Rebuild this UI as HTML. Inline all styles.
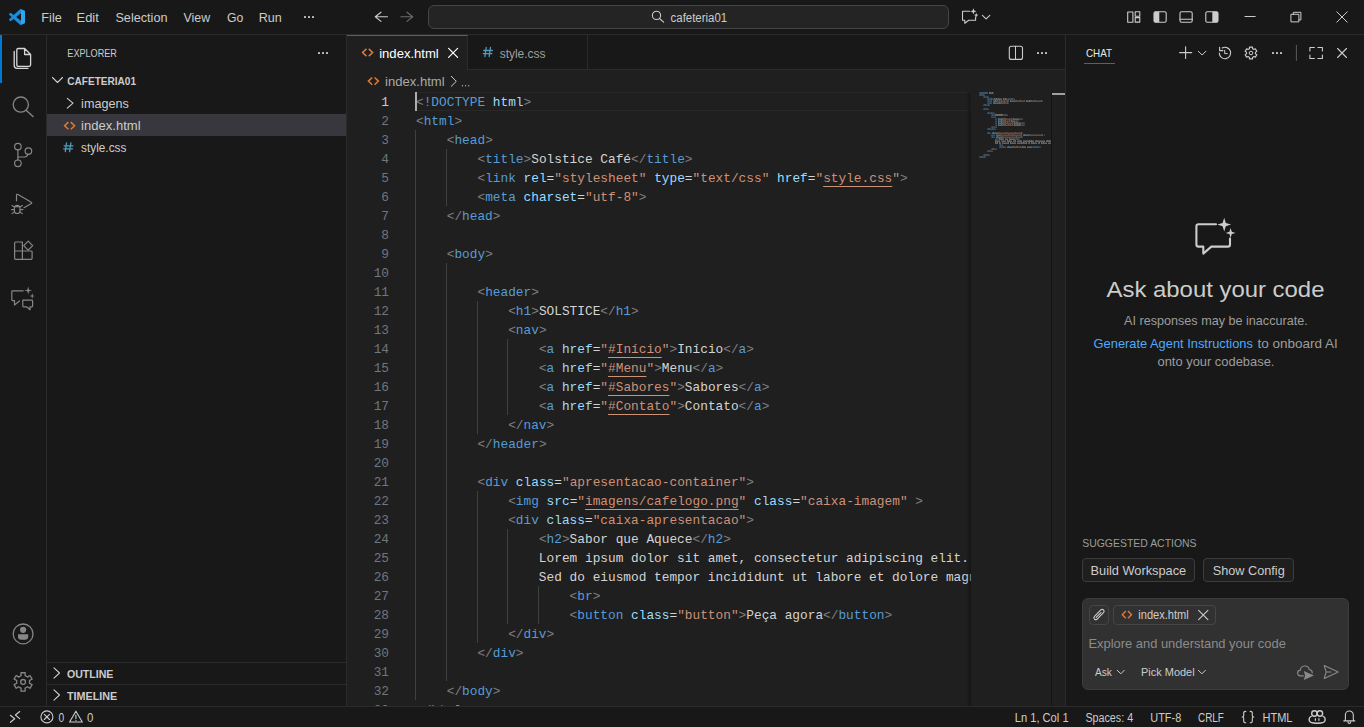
<!DOCTYPE html>
<html><head><meta charset="utf-8">
<style>
*{margin:0;padding:0;box-sizing:border-box}
html,body{width:1364px;height:727px;overflow:hidden;background:#181818;font-family:"Liberation Sans",sans-serif;color:#CCCCCC}
.a{position:absolute}
.code{font-family:"Liberation Mono",monospace;font-size:12.80px;white-space:pre;line-height:19px}
.t{color:#808080}.n{color:#569CD6}.at{color:#9CDCFE}.s{color:#CE9178}.x{color:#D4D4D4}
.u{text-decoration:underline;text-decoration-color:#CE9178;text-underline-offset:4px}
.guide{position:absolute;width:1px;background:#404040}
</style></head><body>
<div class="a" style="left:0;top:0;width:1364px;height:35px;background:#181818;border-bottom:1px solid #2B2B2B"></div>
<div class="a" style="left:0;top:35px;width:47px;height:671px;background:#181818;border-right:1px solid #2B2B2B"></div>
<div class="a" style="left:0;top:35px;width:2px;height:48px;background:#0078D4"></div>
<div class="a" style="left:47px;top:35px;width:300px;height:671px;background:#181818;border-right:1px solid #2B2B2B"></div>
<div class="a" style="left:347px;top:35px;width:719px;height:671px;background:#1F1F1F;border-right:1px solid #2B2B2B"></div>
<div class="a" style="left:1066px;top:35px;width:298px;height:671px;background:#181818"></div>
<div class="a" style="left:0;top:706px;width:1364px;height:21px;background:#181818;border-top:1px solid #2B2B2B"></div>
<!-- title search box -->
<div class="a" style="left:428px;top:5px;width:521px;height:24px;border:1px solid #454545;border-radius:6px;background:#242424"></div>
<!-- sidebar -->
<div class="a" style="left:47px;top:114px;width:299px;height:22px;background:#37373D"></div>
<div class="a" style="left:47px;top:662px;width:299px;height:1px;background:#2B2B2B"></div>
<div class="a" style="left:47px;top:684px;width:299px;height:1px;background:#2B2B2B"></div>
<!-- tabs -->
<div class="a" style="left:347px;top:35px;width:718px;height:35px;background:#181818;border-bottom:1px solid #2B2B2B"></div>
<div class="a" style="left:347px;top:35px;width:121px;height:35px;background:#1F1F1F;border-top:1px solid #0078D4;border-right:1px solid #2B2B2B"></div>
<div class="a" style="left:468px;top:35px;width:120px;height:34px;border-right:1px solid #2B2B2B"></div>
<!-- line highlight -->
<div class="a" style="left:415px;top:92px;width:556px;height:19px;border:1px solid #282828;border-left:none"></div>
<div class="a" style="left:0;top:0;width:1364px;height:706px;overflow:hidden">
<div class="a code" style="left:347px;top:93px;width:42px;text-align:right;color:#CCCCCC">1</div>
<div class="a code" style="left:347px;top:112px;width:42px;text-align:right;color:#6E7681">2</div>
<div class="a code" style="left:347px;top:131px;width:42px;text-align:right;color:#6E7681">3</div>
<div class="a code" style="left:347px;top:150px;width:42px;text-align:right;color:#6E7681">4</div>
<div class="a code" style="left:347px;top:169px;width:42px;text-align:right;color:#6E7681">5</div>
<div class="a code" style="left:347px;top:188px;width:42px;text-align:right;color:#6E7681">6</div>
<div class="a code" style="left:347px;top:207px;width:42px;text-align:right;color:#6E7681">7</div>
<div class="a code" style="left:347px;top:226px;width:42px;text-align:right;color:#6E7681">8</div>
<div class="a code" style="left:347px;top:245px;width:42px;text-align:right;color:#6E7681">9</div>
<div class="a code" style="left:347px;top:264px;width:42px;text-align:right;color:#6E7681">10</div>
<div class="a code" style="left:347px;top:283px;width:42px;text-align:right;color:#6E7681">11</div>
<div class="a code" style="left:347px;top:302px;width:42px;text-align:right;color:#6E7681">12</div>
<div class="a code" style="left:347px;top:321px;width:42px;text-align:right;color:#6E7681">13</div>
<div class="a code" style="left:347px;top:340px;width:42px;text-align:right;color:#6E7681">14</div>
<div class="a code" style="left:347px;top:359px;width:42px;text-align:right;color:#6E7681">15</div>
<div class="a code" style="left:347px;top:378px;width:42px;text-align:right;color:#6E7681">16</div>
<div class="a code" style="left:347px;top:397px;width:42px;text-align:right;color:#6E7681">17</div>
<div class="a code" style="left:347px;top:416px;width:42px;text-align:right;color:#6E7681">18</div>
<div class="a code" style="left:347px;top:435px;width:42px;text-align:right;color:#6E7681">19</div>
<div class="a code" style="left:347px;top:454px;width:42px;text-align:right;color:#6E7681">20</div>
<div class="a code" style="left:347px;top:473px;width:42px;text-align:right;color:#6E7681">21</div>
<div class="a code" style="left:347px;top:492px;width:42px;text-align:right;color:#6E7681">22</div>
<div class="a code" style="left:347px;top:511px;width:42px;text-align:right;color:#6E7681">23</div>
<div class="a code" style="left:347px;top:530px;width:42px;text-align:right;color:#6E7681">24</div>
<div class="a code" style="left:347px;top:549px;width:42px;text-align:right;color:#6E7681">25</div>
<div class="a code" style="left:347px;top:568px;width:42px;text-align:right;color:#6E7681">26</div>
<div class="a code" style="left:347px;top:587px;width:42px;text-align:right;color:#6E7681">27</div>
<div class="a code" style="left:347px;top:606px;width:42px;text-align:right;color:#6E7681">28</div>
<div class="a code" style="left:347px;top:625px;width:42px;text-align:right;color:#6E7681">29</div>
<div class="a code" style="left:347px;top:644px;width:42px;text-align:right;color:#6E7681">30</div>
<div class="a code" style="left:347px;top:663px;width:42px;text-align:right;color:#6E7681">31</div>
<div class="a code" style="left:347px;top:682px;width:42px;text-align:right;color:#6E7681">32</div>
<div class="a code" style="left:347px;top:701px;width:42px;text-align:right;color:#6E7681">33</div>
<div class="guide" style="left:415px;top:130px;height:19px"></div>
<div class="guide" style="left:415px;top:149px;height:19px"></div>
<div class="guide" style="left:446px;top:149px;height:19px"></div>
<div class="guide" style="left:415px;top:168px;height:19px"></div>
<div class="guide" style="left:446px;top:168px;height:19px"></div>
<div class="guide" style="left:415px;top:187px;height:19px"></div>
<div class="guide" style="left:446px;top:187px;height:19px"></div>
<div class="guide" style="left:415px;top:206px;height:19px"></div>
<div class="guide" style="left:415px;top:225px;height:19px"></div>
<div class="guide" style="left:415px;top:244px;height:19px"></div>
<div class="guide" style="left:415px;top:263px;height:19px"></div>
<div class="guide" style="left:446px;top:263px;height:19px"></div>
<div class="guide" style="left:415px;top:282px;height:19px"></div>
<div class="guide" style="left:446px;top:282px;height:19px"></div>
<div class="guide" style="left:415px;top:301px;height:19px"></div>
<div class="guide" style="left:446px;top:301px;height:19px"></div>
<div class="guide" style="left:477px;top:301px;height:19px"></div>
<div class="guide" style="left:415px;top:320px;height:19px"></div>
<div class="guide" style="left:446px;top:320px;height:19px"></div>
<div class="guide" style="left:477px;top:320px;height:19px"></div>
<div class="guide" style="left:415px;top:339px;height:19px"></div>
<div class="guide" style="left:446px;top:339px;height:19px"></div>
<div class="guide" style="left:477px;top:339px;height:19px"></div>
<div class="guide" style="left:507px;top:339px;height:19px"></div>
<div class="guide" style="left:415px;top:358px;height:19px"></div>
<div class="guide" style="left:446px;top:358px;height:19px"></div>
<div class="guide" style="left:477px;top:358px;height:19px"></div>
<div class="guide" style="left:507px;top:358px;height:19px"></div>
<div class="guide" style="left:415px;top:377px;height:19px"></div>
<div class="guide" style="left:446px;top:377px;height:19px"></div>
<div class="guide" style="left:477px;top:377px;height:19px"></div>
<div class="guide" style="left:507px;top:377px;height:19px"></div>
<div class="guide" style="left:415px;top:396px;height:19px"></div>
<div class="guide" style="left:446px;top:396px;height:19px"></div>
<div class="guide" style="left:477px;top:396px;height:19px"></div>
<div class="guide" style="left:507px;top:396px;height:19px"></div>
<div class="guide" style="left:415px;top:415px;height:19px"></div>
<div class="guide" style="left:446px;top:415px;height:19px"></div>
<div class="guide" style="left:477px;top:415px;height:19px"></div>
<div class="guide" style="left:415px;top:434px;height:19px"></div>
<div class="guide" style="left:446px;top:434px;height:19px"></div>
<div class="guide" style="left:415px;top:453px;height:19px"></div>
<div class="guide" style="left:446px;top:453px;height:19px"></div>
<div class="guide" style="left:415px;top:472px;height:19px"></div>
<div class="guide" style="left:446px;top:472px;height:19px"></div>
<div class="guide" style="left:415px;top:491px;height:19px"></div>
<div class="guide" style="left:446px;top:491px;height:19px"></div>
<div class="guide" style="left:477px;top:491px;height:19px"></div>
<div class="guide" style="left:415px;top:510px;height:19px"></div>
<div class="guide" style="left:446px;top:510px;height:19px"></div>
<div class="guide" style="left:477px;top:510px;height:19px"></div>
<div class="guide" style="left:415px;top:529px;height:19px"></div>
<div class="guide" style="left:446px;top:529px;height:19px"></div>
<div class="guide" style="left:477px;top:529px;height:19px"></div>
<div class="guide" style="left:507px;top:529px;height:19px"></div>
<div class="guide" style="left:415px;top:548px;height:19px"></div>
<div class="guide" style="left:446px;top:548px;height:19px"></div>
<div class="guide" style="left:477px;top:548px;height:19px"></div>
<div class="guide" style="left:507px;top:548px;height:19px"></div>
<div class="guide" style="left:415px;top:567px;height:19px"></div>
<div class="guide" style="left:446px;top:567px;height:19px"></div>
<div class="guide" style="left:477px;top:567px;height:19px"></div>
<div class="guide" style="left:507px;top:567px;height:19px"></div>
<div class="guide" style="left:415px;top:586px;height:19px"></div>
<div class="guide" style="left:446px;top:586px;height:19px"></div>
<div class="guide" style="left:477px;top:586px;height:19px"></div>
<div class="guide" style="left:507px;top:586px;height:19px"></div>
<div class="guide" style="left:538px;top:586px;height:19px"></div>
<div class="guide" style="left:415px;top:605px;height:19px"></div>
<div class="guide" style="left:446px;top:605px;height:19px"></div>
<div class="guide" style="left:477px;top:605px;height:19px"></div>
<div class="guide" style="left:507px;top:605px;height:19px"></div>
<div class="guide" style="left:538px;top:605px;height:19px"></div>
<div class="guide" style="left:415px;top:624px;height:19px"></div>
<div class="guide" style="left:446px;top:624px;height:19px"></div>
<div class="guide" style="left:477px;top:624px;height:19px"></div>
<div class="guide" style="left:415px;top:643px;height:19px"></div>
<div class="guide" style="left:446px;top:643px;height:19px"></div>
<div class="guide" style="left:415px;top:662px;height:19px"></div>
<div class="guide" style="left:446px;top:662px;height:19px"></div>
<div class="guide" style="left:415px;top:681px;height:19px"></div>
</div>
<div class="a code" style="left:416px;top:93px;width:555px;height:613px;overflow:hidden">
<div style="position:absolute;left:0;top:0px"><span class="t">&lt;</span><span class="n">!DOCTYPE</span><span class="x"> </span><span class="at">html</span><span class="t">&gt;</span></div>
<div style="position:absolute;left:0;top:19px"><span class="t">&lt;</span><span class="n">html</span><span class="t">&gt;</span></div>
<div style="position:absolute;left:0;top:38px"><span class="x">    </span><span class="t">&lt;</span><span class="n">head</span><span class="t">&gt;</span></div>
<div style="position:absolute;left:0;top:57px"><span class="x">        </span><span class="t">&lt;</span><span class="n">title</span><span class="t">&gt;</span><span class="x">Solstice Café</span><span class="t">&lt;/</span><span class="n">title</span><span class="t">&gt;</span></div>
<div style="position:absolute;left:0;top:76px"><span class="x">        </span><span class="t">&lt;</span><span class="n">link</span><span class="x"> </span><span class="at">rel</span><span class="x">=</span><span class="s">&quot;</span><span class="s">stylesheet</span><span class="s">&quot;</span><span class="x"> </span><span class="at">type</span><span class="x">=</span><span class="s">&quot;</span><span class="s">text/css</span><span class="s">&quot;</span><span class="x"> </span><span class="at">href</span><span class="x">=</span><span class="s">&quot;</span><span class="s u">style.css</span><span class="s">&quot;</span><span class="t">&gt;</span></div>
<div style="position:absolute;left:0;top:95px"><span class="x">        </span><span class="t">&lt;</span><span class="n">meta</span><span class="x"> </span><span class="at">charset</span><span class="x">=</span><span class="s">&quot;</span><span class="s">utf-8</span><span class="s">&quot;</span><span class="t">&gt;</span></div>
<div style="position:absolute;left:0;top:114px"><span class="x">    </span><span class="t">&lt;/</span><span class="n">head</span><span class="t">&gt;</span></div>
<div style="position:absolute;left:0;top:133px"></div>
<div style="position:absolute;left:0;top:152px"><span class="x">    </span><span class="t">&lt;</span><span class="n">body</span><span class="t">&gt;</span></div>
<div style="position:absolute;left:0;top:171px"></div>
<div style="position:absolute;left:0;top:190px"><span class="x">        </span><span class="t">&lt;</span><span class="n">header</span><span class="t">&gt;</span></div>
<div style="position:absolute;left:0;top:209px"><span class="x">            </span><span class="t">&lt;</span><span class="n">h1</span><span class="t">&gt;</span><span class="x">SOLSTICE</span><span class="t">&lt;/</span><span class="n">h1</span><span class="t">&gt;</span></div>
<div style="position:absolute;left:0;top:228px"><span class="x">            </span><span class="t">&lt;</span><span class="n">nav</span><span class="t">&gt;</span></div>
<div style="position:absolute;left:0;top:247px"><span class="x">                </span><span class="t">&lt;</span><span class="n">a</span><span class="x"> </span><span class="at">href</span><span class="x">=</span><span class="s">&quot;</span><span class="s u">#Início</span><span class="s">&quot;</span><span class="t">&gt;</span><span class="x">Início</span><span class="t">&lt;/</span><span class="n">a</span><span class="t">&gt;</span></div>
<div style="position:absolute;left:0;top:266px"><span class="x">                </span><span class="t">&lt;</span><span class="n">a</span><span class="x"> </span><span class="at">href</span><span class="x">=</span><span class="s">&quot;</span><span class="s u">#Menu</span><span class="s">&quot;</span><span class="t">&gt;</span><span class="x">Menu</span><span class="t">&lt;/</span><span class="n">a</span><span class="t">&gt;</span></div>
<div style="position:absolute;left:0;top:285px"><span class="x">                </span><span class="t">&lt;</span><span class="n">a</span><span class="x"> </span><span class="at">href</span><span class="x">=</span><span class="s">&quot;</span><span class="s u">#Sabores</span><span class="s">&quot;</span><span class="t">&gt;</span><span class="x">Sabores</span><span class="t">&lt;/</span><span class="n">a</span><span class="t">&gt;</span></div>
<div style="position:absolute;left:0;top:304px"><span class="x">                </span><span class="t">&lt;</span><span class="n">a</span><span class="x"> </span><span class="at">href</span><span class="x">=</span><span class="s">&quot;</span><span class="s u">#Contato</span><span class="s">&quot;</span><span class="t">&gt;</span><span class="x">Contato</span><span class="t">&lt;/</span><span class="n">a</span><span class="t">&gt;</span></div>
<div style="position:absolute;left:0;top:323px"><span class="x">            </span><span class="t">&lt;/</span><span class="n">nav</span><span class="t">&gt;</span></div>
<div style="position:absolute;left:0;top:342px"><span class="x">        </span><span class="t">&lt;/</span><span class="n">header</span><span class="t">&gt;</span></div>
<div style="position:absolute;left:0;top:361px"></div>
<div style="position:absolute;left:0;top:380px"><span class="x">        </span><span class="t">&lt;</span><span class="n">div</span><span class="x"> </span><span class="at">class</span><span class="x">=</span><span class="s">&quot;</span><span class="s">apresentacao-container</span><span class="s">&quot;</span><span class="t">&gt;</span></div>
<div style="position:absolute;left:0;top:399px"><span class="x">            </span><span class="t">&lt;</span><span class="n">img</span><span class="x"> </span><span class="at">src</span><span class="x">=</span><span class="s">&quot;</span><span class="s u">imagens/cafelogo.png</span><span class="s">&quot;</span><span class="x"> </span><span class="at">class</span><span class="x">=</span><span class="s">&quot;</span><span class="s">caixa-imagem</span><span class="s">&quot;</span><span class="x"> </span><span class="t">&gt;</span></div>
<div style="position:absolute;left:0;top:418px"><span class="x">            </span><span class="t">&lt;</span><span class="n">div</span><span class="x"> </span><span class="at">class</span><span class="x">=</span><span class="s">&quot;</span><span class="s">caixa-apresentacao</span><span class="s">&quot;</span><span class="t">&gt;</span></div>
<div style="position:absolute;left:0;top:437px"><span class="x">                </span><span class="t">&lt;</span><span class="n">h2</span><span class="t">&gt;</span><span class="x">Sabor que Aquece</span><span class="t">&lt;/</span><span class="n">h2</span><span class="t">&gt;</span></div>
<div style="position:absolute;left:0;top:456px"><span class="x">                Lorem ipsum dolor sit amet, consectetur adipiscing elit.</span></div>
<div style="position:absolute;left:0;top:475px"><span class="x">                Sed do eiusmod tempor incididunt ut labore et dolore magna aliqua.</span></div>
<div style="position:absolute;left:0;top:494px"><span class="x">                    </span><span class="t">&lt;</span><span class="n">br</span><span class="t">&gt;</span></div>
<div style="position:absolute;left:0;top:513px"><span class="x">                    </span><span class="t">&lt;</span><span class="n">button</span><span class="x"> </span><span class="at">class</span><span class="x">=</span><span class="s">&quot;</span><span class="s">button</span><span class="s">&quot;</span><span class="t">&gt;</span><span class="x">Peça agora</span><span class="t">&lt;/</span><span class="n">button</span><span class="t">&gt;</span></div>
<div style="position:absolute;left:0;top:532px"><span class="x">            </span><span class="t">&lt;/</span><span class="n">div</span><span class="t">&gt;</span></div>
<div style="position:absolute;left:0;top:551px"><span class="x">        </span><span class="t">&lt;/</span><span class="n">div</span><span class="t">&gt;</span></div>
<div style="position:absolute;left:0;top:570px"></div>
<div style="position:absolute;left:0;top:589px"><span class="x">    </span><span class="t">&lt;/</span><span class="n">body</span><span class="t">&gt;</span></div>
<div style="position:absolute;left:0;top:608px"><span class="t">&lt;/</span><span class="n">html</span><span class="t">&gt;</span></div>
</div>
<div class="a" style="left:415px;top:92px;width:2px;height:19px;background:#AEAFAD"></div>
<div class="a" style="left:966px;top:92px;width:5px;height:614px;background:linear-gradient(to right,rgba(0,0,0,0),rgba(0,0,0,0.35))"></div>
<svg class="a" style="left:979px;top:92px" width="72" height="70" opacity="0.55"><rect x="0" y="0.6" width="1" height="1.1" fill="#808080"/><rect x="1" y="0.2" width="1" height="1.5" fill="#569CD6"/><rect x="2" y="0.2" width="1" height="1.5" fill="#569CD6"/><rect x="3" y="0.2" width="1" height="1.5" fill="#569CD6"/><rect x="4" y="0.2" width="1" height="1.5" fill="#569CD6"/><rect x="5" y="0.2" width="1" height="1.5" fill="#569CD6"/><rect x="6" y="0.2" width="1" height="1.5" fill="#569CD6"/><rect x="7" y="0.2" width="1" height="1.5" fill="#569CD6"/><rect x="8" y="0.2" width="1" height="1.5" fill="#569CD6"/><rect x="10" y="0.2" width="1" height="1.5" fill="#9CDCFE"/><rect x="11" y="0.2" width="1" height="1.5" fill="#9CDCFE"/><rect x="12" y="0.6" width="1" height="1.1" fill="#9CDCFE"/><rect x="13" y="0.2" width="1" height="1.5" fill="#9CDCFE"/><rect x="14" y="0.6" width="1" height="1.1" fill="#808080"/><rect x="0" y="2.6" width="1" height="1.1" fill="#808080"/><rect x="1" y="2.2" width="1" height="1.5" fill="#569CD6"/><rect x="2" y="2.2" width="1" height="1.5" fill="#569CD6"/><rect x="3" y="2.6" width="1" height="1.1" fill="#569CD6"/><rect x="4" y="2.2" width="1" height="1.5" fill="#569CD6"/><rect x="5" y="2.6" width="1" height="1.1" fill="#808080"/><rect x="4" y="4.6" width="1" height="1.1" fill="#808080"/><rect x="5" y="4.2" width="1" height="1.5" fill="#569CD6"/><rect x="6" y="4.6" width="1" height="1.1" fill="#569CD6"/><rect x="7" y="4.6" width="1" height="1.1" fill="#569CD6"/><rect x="8" y="4.2" width="1" height="1.5" fill="#569CD6"/><rect x="9" y="4.6" width="1" height="1.1" fill="#808080"/><rect x="8" y="6.6" width="1" height="1.1" fill="#808080"/><rect x="9" y="6.2" width="1" height="1.5" fill="#569CD6"/><rect x="10" y="6.6" width="1" height="1.1" fill="#569CD6"/><rect x="11" y="6.2" width="1" height="1.5" fill="#569CD6"/><rect x="12" y="6.2" width="1" height="1.5" fill="#569CD6"/><rect x="13" y="6.6" width="1" height="1.1" fill="#569CD6"/><rect x="14" y="6.6" width="1" height="1.1" fill="#808080"/><rect x="15" y="6.2" width="1" height="1.5" fill="#CCCCCC"/><rect x="16" y="6.6" width="1" height="1.1" fill="#CCCCCC"/><rect x="17" y="6.2" width="1" height="1.5" fill="#CCCCCC"/><rect x="18" y="6.6" width="1" height="1.1" fill="#CCCCCC"/><rect x="19" y="6.2" width="1" height="1.5" fill="#CCCCCC"/><rect x="20" y="6.6" width="1" height="1.1" fill="#CCCCCC"/><rect x="21" y="6.6" width="1" height="1.1" fill="#CCCCCC"/><rect x="22" y="6.6" width="1" height="1.1" fill="#CCCCCC"/><rect x="24" y="6.2" width="1" height="1.5" fill="#CCCCCC"/><rect x="25" y="6.6" width="1" height="1.1" fill="#CCCCCC"/><rect x="26" y="6.2" width="1" height="1.5" fill="#CCCCCC"/><rect x="27" y="6.6" width="1" height="1.1" fill="#CCCCCC"/><rect x="28" y="6.6" width="1" height="1.1" fill="#808080"/><rect x="29" y="6.2" width="1" height="1.5" fill="#808080"/><rect x="30" y="6.2" width="1" height="1.5" fill="#569CD6"/><rect x="31" y="6.6" width="1" height="1.1" fill="#569CD6"/><rect x="32" y="6.2" width="1" height="1.5" fill="#569CD6"/><rect x="33" y="6.2" width="1" height="1.5" fill="#569CD6"/><rect x="34" y="6.6" width="1" height="1.1" fill="#569CD6"/><rect x="35" y="6.6" width="1" height="1.1" fill="#808080"/><rect x="8" y="8.6" width="1" height="1.1" fill="#808080"/><rect x="9" y="8.2" width="1" height="1.5" fill="#569CD6"/><rect x="10" y="8.6" width="1" height="1.1" fill="#569CD6"/><rect x="11" y="8.6" width="1" height="1.1" fill="#569CD6"/><rect x="12" y="8.2" width="1" height="1.5" fill="#569CD6"/><rect x="14" y="8.6" width="1" height="1.1" fill="#9CDCFE"/><rect x="15" y="8.6" width="1" height="1.1" fill="#9CDCFE"/><rect x="16" y="8.2" width="1" height="1.5" fill="#9CDCFE"/><rect x="17" y="8.6" width="1" height="1.1" fill="#CCCCCC"/><rect x="18" y="8.2" width="1" height="1.5" fill="#CE9178"/><rect x="19" y="8.6" width="1" height="1.1" fill="#CE9178"/><rect x="20" y="8.2" width="1" height="1.5" fill="#CE9178"/><rect x="21" y="8.6" width="1" height="1.1" fill="#CE9178"/><rect x="22" y="8.2" width="1" height="1.5" fill="#CE9178"/><rect x="23" y="8.6" width="1" height="1.1" fill="#CE9178"/><rect x="24" y="8.6" width="1" height="1.1" fill="#CE9178"/><rect x="25" y="8.2" width="1" height="1.5" fill="#CE9178"/><rect x="26" y="8.6" width="1" height="1.1" fill="#CE9178"/><rect x="27" y="8.6" width="1" height="1.1" fill="#CE9178"/><rect x="28" y="8.2" width="1" height="1.5" fill="#CE9178"/><rect x="29" y="8.2" width="1" height="1.5" fill="#CE9178"/><rect x="31" y="8.2" width="1" height="1.5" fill="#9CDCFE"/><rect x="32" y="8.6" width="1" height="1.1" fill="#9CDCFE"/><rect x="33" y="8.6" width="1" height="1.1" fill="#9CDCFE"/><rect x="34" y="8.6" width="1" height="1.1" fill="#9CDCFE"/><rect x="35" y="8.6" width="1" height="1.1" fill="#CCCCCC"/><rect x="36" y="8.2" width="1" height="1.5" fill="#CE9178"/><rect x="37" y="8.2" width="1" height="1.5" fill="#CE9178"/><rect x="38" y="8.6" width="1" height="1.1" fill="#CE9178"/><rect x="39" y="8.6" width="1" height="1.1" fill="#CE9178"/><rect x="40" y="8.2" width="1" height="1.5" fill="#CE9178"/><rect x="41" y="8.2" width="1" height="1.5" fill="#CE9178"/><rect x="42" y="8.6" width="1" height="1.1" fill="#CE9178"/><rect x="43" y="8.6" width="1" height="1.1" fill="#CE9178"/><rect x="44" y="8.6" width="1" height="1.1" fill="#CE9178"/><rect x="45" y="8.2" width="1" height="1.5" fill="#CE9178"/><rect x="47" y="8.2" width="1" height="1.5" fill="#9CDCFE"/><rect x="48" y="8.6" width="1" height="1.1" fill="#9CDCFE"/><rect x="49" y="8.6" width="1" height="1.1" fill="#9CDCFE"/><rect x="50" y="8.2" width="1" height="1.5" fill="#9CDCFE"/><rect x="51" y="8.6" width="1" height="1.1" fill="#CCCCCC"/><rect x="52" y="8.2" width="1" height="1.5" fill="#CE9178"/><rect x="53" y="8.6" width="1" height="1.1" fill="#CE9178"/><rect x="54" y="8.2" width="1" height="1.5" fill="#CE9178"/><rect x="55" y="8.6" width="1" height="1.1" fill="#CE9178"/><rect x="56" y="8.2" width="1" height="1.5" fill="#CE9178"/><rect x="57" y="8.6" width="1" height="1.1" fill="#CE9178"/><rect x="58" y="8.6" width="1" height="1.1" fill="#CE9178"/><rect x="59" y="8.6" width="1" height="1.1" fill="#CE9178"/><rect x="60" y="8.6" width="1" height="1.1" fill="#CE9178"/><rect x="61" y="8.6" width="1" height="1.1" fill="#CE9178"/><rect x="62" y="8.2" width="1" height="1.5" fill="#CE9178"/><rect x="63" y="8.6" width="1" height="1.1" fill="#808080"/><rect x="8" y="10.6" width="1" height="1.1" fill="#808080"/><rect x="9" y="10.6" width="1" height="1.1" fill="#569CD6"/><rect x="10" y="10.6" width="1" height="1.1" fill="#569CD6"/><rect x="11" y="10.2" width="1" height="1.5" fill="#569CD6"/><rect x="12" y="10.6" width="1" height="1.1" fill="#569CD6"/><rect x="14" y="10.6" width="1" height="1.1" fill="#9CDCFE"/><rect x="15" y="10.2" width="1" height="1.5" fill="#9CDCFE"/><rect x="16" y="10.6" width="1" height="1.1" fill="#9CDCFE"/><rect x="17" y="10.6" width="1" height="1.1" fill="#9CDCFE"/><rect x="18" y="10.6" width="1" height="1.1" fill="#9CDCFE"/><rect x="19" y="10.6" width="1" height="1.1" fill="#9CDCFE"/><rect x="20" y="10.2" width="1" height="1.5" fill="#9CDCFE"/><rect x="21" y="10.6" width="1" height="1.1" fill="#CCCCCC"/><rect x="22" y="10.2" width="1" height="1.5" fill="#CE9178"/><rect x="23" y="10.6" width="1" height="1.1" fill="#CE9178"/><rect x="24" y="10.2" width="1" height="1.5" fill="#CE9178"/><rect x="25" y="10.2" width="1" height="1.5" fill="#CE9178"/><rect x="26" y="10.6" width="1" height="1.1" fill="#CE9178"/><rect x="27" y="10.6" width="1" height="1.1" fill="#CE9178"/><rect x="28" y="10.2" width="1" height="1.5" fill="#CE9178"/><rect x="29" y="10.6" width="1" height="1.1" fill="#808080"/><rect x="4" y="12.6" width="1" height="1.1" fill="#808080"/><rect x="5" y="12.2" width="1" height="1.5" fill="#808080"/><rect x="6" y="12.2" width="1" height="1.5" fill="#569CD6"/><rect x="7" y="12.6" width="1" height="1.1" fill="#569CD6"/><rect x="8" y="12.6" width="1" height="1.1" fill="#569CD6"/><rect x="9" y="12.2" width="1" height="1.5" fill="#569CD6"/><rect x="10" y="12.6" width="1" height="1.1" fill="#808080"/><rect x="4" y="16.6" width="1" height="1.1" fill="#808080"/><rect x="5" y="16.2" width="1" height="1.5" fill="#569CD6"/><rect x="6" y="16.6" width="1" height="1.1" fill="#569CD6"/><rect x="7" y="16.2" width="1" height="1.5" fill="#569CD6"/><rect x="8" y="16.6" width="1" height="1.1" fill="#569CD6"/><rect x="9" y="16.6" width="1" height="1.1" fill="#808080"/><rect x="8" y="20.6" width="1" height="1.1" fill="#808080"/><rect x="9" y="20.2" width="1" height="1.5" fill="#569CD6"/><rect x="10" y="20.6" width="1" height="1.1" fill="#569CD6"/><rect x="11" y="20.6" width="1" height="1.1" fill="#569CD6"/><rect x="12" y="20.2" width="1" height="1.5" fill="#569CD6"/><rect x="13" y="20.6" width="1" height="1.1" fill="#569CD6"/><rect x="14" y="20.6" width="1" height="1.1" fill="#569CD6"/><rect x="15" y="20.6" width="1" height="1.1" fill="#808080"/><rect x="12" y="22.6" width="1" height="1.1" fill="#808080"/><rect x="13" y="22.2" width="1" height="1.5" fill="#569CD6"/><rect x="14" y="22.6" width="1" height="1.1" fill="#569CD6"/><rect x="15" y="22.6" width="1" height="1.1" fill="#808080"/><rect x="16" y="22.2" width="1" height="1.5" fill="#CCCCCC"/><rect x="17" y="22.2" width="1" height="1.5" fill="#CCCCCC"/><rect x="18" y="22.2" width="1" height="1.5" fill="#CCCCCC"/><rect x="19" y="22.2" width="1" height="1.5" fill="#CCCCCC"/><rect x="20" y="22.2" width="1" height="1.5" fill="#CCCCCC"/><rect x="21" y="22.2" width="1" height="1.5" fill="#CCCCCC"/><rect x="22" y="22.2" width="1" height="1.5" fill="#CCCCCC"/><rect x="23" y="22.2" width="1" height="1.5" fill="#CCCCCC"/><rect x="24" y="22.6" width="1" height="1.1" fill="#808080"/><rect x="25" y="22.2" width="1" height="1.5" fill="#808080"/><rect x="26" y="22.2" width="1" height="1.5" fill="#569CD6"/><rect x="27" y="22.6" width="1" height="1.1" fill="#569CD6"/><rect x="28" y="22.6" width="1" height="1.1" fill="#808080"/><rect x="12" y="24.6" width="1" height="1.1" fill="#808080"/><rect x="13" y="24.6" width="1" height="1.1" fill="#569CD6"/><rect x="14" y="24.6" width="1" height="1.1" fill="#569CD6"/><rect x="15" y="24.6" width="1" height="1.1" fill="#569CD6"/><rect x="16" y="24.6" width="1" height="1.1" fill="#808080"/><rect x="16" y="26.6" width="1" height="1.1" fill="#808080"/><rect x="17" y="26.6" width="1" height="1.1" fill="#569CD6"/><rect x="19" y="26.2" width="1" height="1.5" fill="#9CDCFE"/><rect x="20" y="26.6" width="1" height="1.1" fill="#9CDCFE"/><rect x="21" y="26.6" width="1" height="1.1" fill="#9CDCFE"/><rect x="22" y="26.2" width="1" height="1.5" fill="#9CDCFE"/><rect x="23" y="26.6" width="1" height="1.1" fill="#CCCCCC"/><rect x="24" y="26.2" width="1" height="1.5" fill="#CE9178"/><rect x="25" y="26.2" width="1" height="1.5" fill="#CE9178"/><rect x="26" y="26.2" width="1" height="1.5" fill="#CE9178"/><rect x="27" y="26.6" width="1" height="1.1" fill="#CE9178"/><rect x="28" y="26.6" width="1" height="1.1" fill="#CE9178"/><rect x="29" y="26.6" width="1" height="1.1" fill="#CE9178"/><rect x="30" y="26.6" width="1" height="1.1" fill="#CE9178"/><rect x="31" y="26.6" width="1" height="1.1" fill="#CE9178"/><rect x="32" y="26.2" width="1" height="1.5" fill="#CE9178"/><rect x="33" y="26.6" width="1" height="1.1" fill="#808080"/><rect x="34" y="26.2" width="1" height="1.5" fill="#CCCCCC"/><rect x="35" y="26.6" width="1" height="1.1" fill="#CCCCCC"/><rect x="36" y="26.6" width="1" height="1.1" fill="#CCCCCC"/><rect x="37" y="26.6" width="1" height="1.1" fill="#CCCCCC"/><rect x="38" y="26.6" width="1" height="1.1" fill="#CCCCCC"/><rect x="39" y="26.6" width="1" height="1.1" fill="#CCCCCC"/><rect x="40" y="26.6" width="1" height="1.1" fill="#808080"/><rect x="41" y="26.2" width="1" height="1.5" fill="#808080"/><rect x="42" y="26.6" width="1" height="1.1" fill="#569CD6"/><rect x="43" y="26.6" width="1" height="1.1" fill="#808080"/><rect x="16" y="28.6" width="1" height="1.1" fill="#808080"/><rect x="17" y="28.6" width="1" height="1.1" fill="#569CD6"/><rect x="19" y="28.2" width="1" height="1.5" fill="#9CDCFE"/><rect x="20" y="28.6" width="1" height="1.1" fill="#9CDCFE"/><rect x="21" y="28.6" width="1" height="1.1" fill="#9CDCFE"/><rect x="22" y="28.2" width="1" height="1.5" fill="#9CDCFE"/><rect x="23" y="28.6" width="1" height="1.1" fill="#CCCCCC"/><rect x="24" y="28.2" width="1" height="1.5" fill="#CE9178"/><rect x="25" y="28.2" width="1" height="1.5" fill="#CE9178"/><rect x="26" y="28.2" width="1" height="1.5" fill="#CE9178"/><rect x="27" y="28.6" width="1" height="1.1" fill="#CE9178"/><rect x="28" y="28.6" width="1" height="1.1" fill="#CE9178"/><rect x="29" y="28.6" width="1" height="1.1" fill="#CE9178"/><rect x="30" y="28.2" width="1" height="1.5" fill="#CE9178"/><rect x="31" y="28.6" width="1" height="1.1" fill="#808080"/><rect x="32" y="28.2" width="1" height="1.5" fill="#CCCCCC"/><rect x="33" y="28.6" width="1" height="1.1" fill="#CCCCCC"/><rect x="34" y="28.6" width="1" height="1.1" fill="#CCCCCC"/><rect x="35" y="28.6" width="1" height="1.1" fill="#CCCCCC"/><rect x="36" y="28.6" width="1" height="1.1" fill="#808080"/><rect x="37" y="28.2" width="1" height="1.5" fill="#808080"/><rect x="38" y="28.6" width="1" height="1.1" fill="#569CD6"/><rect x="39" y="28.6" width="1" height="1.1" fill="#808080"/><rect x="16" y="30.6" width="1" height="1.1" fill="#808080"/><rect x="17" y="30.6" width="1" height="1.1" fill="#569CD6"/><rect x="19" y="30.2" width="1" height="1.5" fill="#9CDCFE"/><rect x="20" y="30.6" width="1" height="1.1" fill="#9CDCFE"/><rect x="21" y="30.6" width="1" height="1.1" fill="#9CDCFE"/><rect x="22" y="30.2" width="1" height="1.5" fill="#9CDCFE"/><rect x="23" y="30.6" width="1" height="1.1" fill="#CCCCCC"/><rect x="24" y="30.2" width="1" height="1.5" fill="#CE9178"/><rect x="25" y="30.2" width="1" height="1.5" fill="#CE9178"/><rect x="26" y="30.2" width="1" height="1.5" fill="#CE9178"/><rect x="27" y="30.6" width="1" height="1.1" fill="#CE9178"/><rect x="28" y="30.2" width="1" height="1.5" fill="#CE9178"/><rect x="29" y="30.6" width="1" height="1.1" fill="#CE9178"/><rect x="30" y="30.6" width="1" height="1.1" fill="#CE9178"/><rect x="31" y="30.6" width="1" height="1.1" fill="#CE9178"/><rect x="32" y="30.6" width="1" height="1.1" fill="#CE9178"/><rect x="33" y="30.2" width="1" height="1.5" fill="#CE9178"/><rect x="34" y="30.6" width="1" height="1.1" fill="#808080"/><rect x="35" y="30.2" width="1" height="1.5" fill="#CCCCCC"/><rect x="36" y="30.6" width="1" height="1.1" fill="#CCCCCC"/><rect x="37" y="30.2" width="1" height="1.5" fill="#CCCCCC"/><rect x="38" y="30.6" width="1" height="1.1" fill="#CCCCCC"/><rect x="39" y="30.6" width="1" height="1.1" fill="#CCCCCC"/><rect x="40" y="30.6" width="1" height="1.1" fill="#CCCCCC"/><rect x="41" y="30.6" width="1" height="1.1" fill="#CCCCCC"/><rect x="42" y="30.6" width="1" height="1.1" fill="#808080"/><rect x="43" y="30.2" width="1" height="1.5" fill="#808080"/><rect x="44" y="30.6" width="1" height="1.1" fill="#569CD6"/><rect x="45" y="30.6" width="1" height="1.1" fill="#808080"/><rect x="16" y="32.6" width="1" height="1.1" fill="#808080"/><rect x="17" y="32.6" width="1" height="1.1" fill="#569CD6"/><rect x="19" y="32.2" width="1" height="1.5" fill="#9CDCFE"/><rect x="20" y="32.6" width="1" height="1.1" fill="#9CDCFE"/><rect x="21" y="32.6" width="1" height="1.1" fill="#9CDCFE"/><rect x="22" y="32.2" width="1" height="1.5" fill="#9CDCFE"/><rect x="23" y="32.6" width="1" height="1.1" fill="#CCCCCC"/><rect x="24" y="32.2" width="1" height="1.5" fill="#CE9178"/><rect x="25" y="32.2" width="1" height="1.5" fill="#CE9178"/><rect x="26" y="32.2" width="1" height="1.5" fill="#CE9178"/><rect x="27" y="32.6" width="1" height="1.1" fill="#CE9178"/><rect x="28" y="32.6" width="1" height="1.1" fill="#CE9178"/><rect x="29" y="32.2" width="1" height="1.5" fill="#CE9178"/><rect x="30" y="32.6" width="1" height="1.1" fill="#CE9178"/><rect x="31" y="32.2" width="1" height="1.5" fill="#CE9178"/><rect x="32" y="32.6" width="1" height="1.1" fill="#CE9178"/><rect x="33" y="32.2" width="1" height="1.5" fill="#CE9178"/><rect x="34" y="32.6" width="1" height="1.1" fill="#808080"/><rect x="35" y="32.2" width="1" height="1.5" fill="#CCCCCC"/><rect x="36" y="32.6" width="1" height="1.1" fill="#CCCCCC"/><rect x="37" y="32.6" width="1" height="1.1" fill="#CCCCCC"/><rect x="38" y="32.2" width="1" height="1.5" fill="#CCCCCC"/><rect x="39" y="32.6" width="1" height="1.1" fill="#CCCCCC"/><rect x="40" y="32.2" width="1" height="1.5" fill="#CCCCCC"/><rect x="41" y="32.6" width="1" height="1.1" fill="#CCCCCC"/><rect x="42" y="32.6" width="1" height="1.1" fill="#808080"/><rect x="43" y="32.2" width="1" height="1.5" fill="#808080"/><rect x="44" y="32.6" width="1" height="1.1" fill="#569CD6"/><rect x="45" y="32.6" width="1" height="1.1" fill="#808080"/><rect x="12" y="34.6" width="1" height="1.1" fill="#808080"/><rect x="13" y="34.2" width="1" height="1.5" fill="#808080"/><rect x="14" y="34.6" width="1" height="1.1" fill="#569CD6"/><rect x="15" y="34.6" width="1" height="1.1" fill="#569CD6"/><rect x="16" y="34.6" width="1" height="1.1" fill="#569CD6"/><rect x="17" y="34.6" width="1" height="1.1" fill="#808080"/><rect x="8" y="36.6" width="1" height="1.1" fill="#808080"/><rect x="9" y="36.2" width="1" height="1.5" fill="#808080"/><rect x="10" y="36.2" width="1" height="1.5" fill="#569CD6"/><rect x="11" y="36.6" width="1" height="1.1" fill="#569CD6"/><rect x="12" y="36.6" width="1" height="1.1" fill="#569CD6"/><rect x="13" y="36.2" width="1" height="1.5" fill="#569CD6"/><rect x="14" y="36.6" width="1" height="1.1" fill="#569CD6"/><rect x="15" y="36.6" width="1" height="1.1" fill="#569CD6"/><rect x="16" y="36.6" width="1" height="1.1" fill="#808080"/><rect x="8" y="40.6" width="1" height="1.1" fill="#808080"/><rect x="9" y="40.2" width="1" height="1.5" fill="#569CD6"/><rect x="10" y="40.6" width="1" height="1.1" fill="#569CD6"/><rect x="11" y="40.6" width="1" height="1.1" fill="#569CD6"/><rect x="13" y="40.6" width="1" height="1.1" fill="#9CDCFE"/><rect x="14" y="40.2" width="1" height="1.5" fill="#9CDCFE"/><rect x="15" y="40.6" width="1" height="1.1" fill="#9CDCFE"/><rect x="16" y="40.6" width="1" height="1.1" fill="#9CDCFE"/><rect x="17" y="40.6" width="1" height="1.1" fill="#9CDCFE"/><rect x="18" y="40.6" width="1" height="1.1" fill="#CCCCCC"/><rect x="19" y="40.2" width="1" height="1.5" fill="#CE9178"/><rect x="20" y="40.6" width="1" height="1.1" fill="#CE9178"/><rect x="21" y="40.6" width="1" height="1.1" fill="#CE9178"/><rect x="22" y="40.6" width="1" height="1.1" fill="#CE9178"/><rect x="23" y="40.6" width="1" height="1.1" fill="#CE9178"/><rect x="24" y="40.6" width="1" height="1.1" fill="#CE9178"/><rect x="25" y="40.6" width="1" height="1.1" fill="#CE9178"/><rect x="26" y="40.6" width="1" height="1.1" fill="#CE9178"/><rect x="27" y="40.2" width="1" height="1.5" fill="#CE9178"/><rect x="28" y="40.6" width="1" height="1.1" fill="#CE9178"/><rect x="29" y="40.6" width="1" height="1.1" fill="#CE9178"/><rect x="30" y="40.6" width="1" height="1.1" fill="#CE9178"/><rect x="31" y="40.6" width="1" height="1.1" fill="#CE9178"/><rect x="32" y="40.6" width="1" height="1.1" fill="#CE9178"/><rect x="33" y="40.6" width="1" height="1.1" fill="#CE9178"/><rect x="34" y="40.6" width="1" height="1.1" fill="#CE9178"/><rect x="35" y="40.6" width="1" height="1.1" fill="#CE9178"/><rect x="36" y="40.2" width="1" height="1.5" fill="#CE9178"/><rect x="37" y="40.6" width="1" height="1.1" fill="#CE9178"/><rect x="38" y="40.6" width="1" height="1.1" fill="#CE9178"/><rect x="39" y="40.6" width="1" height="1.1" fill="#CE9178"/><rect x="40" y="40.6" width="1" height="1.1" fill="#CE9178"/><rect x="41" y="40.6" width="1" height="1.1" fill="#CE9178"/><rect x="42" y="40.2" width="1" height="1.5" fill="#CE9178"/><rect x="43" y="40.6" width="1" height="1.1" fill="#808080"/><rect x="12" y="42.6" width="1" height="1.1" fill="#808080"/><rect x="13" y="42.6" width="1" height="1.1" fill="#569CD6"/><rect x="14" y="42.6" width="1" height="1.1" fill="#569CD6"/><rect x="15" y="42.6" width="1" height="1.1" fill="#569CD6"/><rect x="17" y="42.6" width="1" height="1.1" fill="#9CDCFE"/><rect x="18" y="42.6" width="1" height="1.1" fill="#9CDCFE"/><rect x="19" y="42.6" width="1" height="1.1" fill="#9CDCFE"/><rect x="20" y="42.6" width="1" height="1.1" fill="#CCCCCC"/><rect x="21" y="42.2" width="1" height="1.5" fill="#CE9178"/><rect x="22" y="42.6" width="1" height="1.1" fill="#CE9178"/><rect x="23" y="42.6" width="1" height="1.1" fill="#CE9178"/><rect x="24" y="42.6" width="1" height="1.1" fill="#CE9178"/><rect x="25" y="42.6" width="1" height="1.1" fill="#CE9178"/><rect x="26" y="42.6" width="1" height="1.1" fill="#CE9178"/><rect x="27" y="42.6" width="1" height="1.1" fill="#CE9178"/><rect x="28" y="42.6" width="1" height="1.1" fill="#CE9178"/><rect x="29" y="42.2" width="1" height="1.5" fill="#CE9178"/><rect x="30" y="42.6" width="1" height="1.1" fill="#CE9178"/><rect x="31" y="42.6" width="1" height="1.1" fill="#CE9178"/><rect x="32" y="42.2" width="1" height="1.5" fill="#CE9178"/><rect x="33" y="42.6" width="1" height="1.1" fill="#CE9178"/><rect x="34" y="42.2" width="1" height="1.5" fill="#CE9178"/><rect x="35" y="42.6" width="1" height="1.1" fill="#CE9178"/><rect x="36" y="42.6" width="1" height="1.1" fill="#CE9178"/><rect x="37" y="42.6" width="1" height="1.1" fill="#CE9178"/><rect x="38" y="42.6" width="1" height="1.1" fill="#CE9178"/><rect x="39" y="42.6" width="1" height="1.1" fill="#CE9178"/><rect x="40" y="42.6" width="1" height="1.1" fill="#CE9178"/><rect x="41" y="42.6" width="1" height="1.1" fill="#CE9178"/><rect x="42" y="42.2" width="1" height="1.5" fill="#CE9178"/><rect x="44" y="42.6" width="1" height="1.1" fill="#9CDCFE"/><rect x="45" y="42.2" width="1" height="1.5" fill="#9CDCFE"/><rect x="46" y="42.6" width="1" height="1.1" fill="#9CDCFE"/><rect x="47" y="42.6" width="1" height="1.1" fill="#9CDCFE"/><rect x="48" y="42.6" width="1" height="1.1" fill="#9CDCFE"/><rect x="49" y="42.6" width="1" height="1.1" fill="#CCCCCC"/><rect x="50" y="42.2" width="1" height="1.5" fill="#CE9178"/><rect x="51" y="42.6" width="1" height="1.1" fill="#CE9178"/><rect x="52" y="42.6" width="1" height="1.1" fill="#CE9178"/><rect x="53" y="42.6" width="1" height="1.1" fill="#CE9178"/><rect x="54" y="42.6" width="1" height="1.1" fill="#CE9178"/><rect x="55" y="42.6" width="1" height="1.1" fill="#CE9178"/><rect x="56" y="42.6" width="1" height="1.1" fill="#CE9178"/><rect x="57" y="42.6" width="1" height="1.1" fill="#CE9178"/><rect x="58" y="42.6" width="1" height="1.1" fill="#CE9178"/><rect x="59" y="42.6" width="1" height="1.1" fill="#CE9178"/><rect x="60" y="42.6" width="1" height="1.1" fill="#CE9178"/><rect x="61" y="42.6" width="1" height="1.1" fill="#CE9178"/><rect x="62" y="42.6" width="1" height="1.1" fill="#CE9178"/><rect x="63" y="42.2" width="1" height="1.5" fill="#CE9178"/><rect x="65" y="42.6" width="1" height="1.1" fill="#808080"/><rect x="12" y="44.6" width="1" height="1.1" fill="#808080"/><rect x="13" y="44.2" width="1" height="1.5" fill="#569CD6"/><rect x="14" y="44.6" width="1" height="1.1" fill="#569CD6"/><rect x="15" y="44.6" width="1" height="1.1" fill="#569CD6"/><rect x="17" y="44.6" width="1" height="1.1" fill="#9CDCFE"/><rect x="18" y="44.2" width="1" height="1.5" fill="#9CDCFE"/><rect x="19" y="44.6" width="1" height="1.1" fill="#9CDCFE"/><rect x="20" y="44.6" width="1" height="1.1" fill="#9CDCFE"/><rect x="21" y="44.6" width="1" height="1.1" fill="#9CDCFE"/><rect x="22" y="44.6" width="1" height="1.1" fill="#CCCCCC"/><rect x="23" y="44.2" width="1" height="1.5" fill="#CE9178"/><rect x="24" y="44.6" width="1" height="1.1" fill="#CE9178"/><rect x="25" y="44.6" width="1" height="1.1" fill="#CE9178"/><rect x="26" y="44.6" width="1" height="1.1" fill="#CE9178"/><rect x="27" y="44.6" width="1" height="1.1" fill="#CE9178"/><rect x="28" y="44.6" width="1" height="1.1" fill="#CE9178"/><rect x="29" y="44.6" width="1" height="1.1" fill="#CE9178"/><rect x="30" y="44.6" width="1" height="1.1" fill="#CE9178"/><rect x="31" y="44.6" width="1" height="1.1" fill="#CE9178"/><rect x="32" y="44.6" width="1" height="1.1" fill="#CE9178"/><rect x="33" y="44.6" width="1" height="1.1" fill="#CE9178"/><rect x="34" y="44.6" width="1" height="1.1" fill="#CE9178"/><rect x="35" y="44.6" width="1" height="1.1" fill="#CE9178"/><rect x="36" y="44.6" width="1" height="1.1" fill="#CE9178"/><rect x="37" y="44.2" width="1" height="1.5" fill="#CE9178"/><rect x="38" y="44.6" width="1" height="1.1" fill="#CE9178"/><rect x="39" y="44.6" width="1" height="1.1" fill="#CE9178"/><rect x="40" y="44.6" width="1" height="1.1" fill="#CE9178"/><rect x="41" y="44.6" width="1" height="1.1" fill="#CE9178"/><rect x="42" y="44.2" width="1" height="1.5" fill="#CE9178"/><rect x="43" y="44.6" width="1" height="1.1" fill="#808080"/><rect x="16" y="46.6" width="1" height="1.1" fill="#808080"/><rect x="17" y="46.2" width="1" height="1.5" fill="#569CD6"/><rect x="18" y="46.6" width="1" height="1.1" fill="#569CD6"/><rect x="19" y="46.6" width="1" height="1.1" fill="#808080"/><rect x="20" y="46.2" width="1" height="1.5" fill="#CCCCCC"/><rect x="21" y="46.6" width="1" height="1.1" fill="#CCCCCC"/><rect x="22" y="46.2" width="1" height="1.5" fill="#CCCCCC"/><rect x="23" y="46.6" width="1" height="1.1" fill="#CCCCCC"/><rect x="24" y="46.6" width="1" height="1.1" fill="#CCCCCC"/><rect x="26" y="46.6" width="1" height="1.1" fill="#CCCCCC"/><rect x="27" y="46.6" width="1" height="1.1" fill="#CCCCCC"/><rect x="28" y="46.6" width="1" height="1.1" fill="#CCCCCC"/><rect x="30" y="46.2" width="1" height="1.5" fill="#CCCCCC"/><rect x="31" y="46.6" width="1" height="1.1" fill="#CCCCCC"/><rect x="32" y="46.6" width="1" height="1.1" fill="#CCCCCC"/><rect x="33" y="46.6" width="1" height="1.1" fill="#CCCCCC"/><rect x="34" y="46.6" width="1" height="1.1" fill="#CCCCCC"/><rect x="35" y="46.6" width="1" height="1.1" fill="#CCCCCC"/><rect x="36" y="46.6" width="1" height="1.1" fill="#808080"/><rect x="37" y="46.2" width="1" height="1.5" fill="#808080"/><rect x="38" y="46.2" width="1" height="1.5" fill="#569CD6"/><rect x="39" y="46.6" width="1" height="1.1" fill="#569CD6"/><rect x="40" y="46.6" width="1" height="1.1" fill="#808080"/><rect x="16" y="48.2" width="1" height="1.5" fill="#CCCCCC"/><rect x="17" y="48.6" width="1" height="1.1" fill="#CCCCCC"/><rect x="18" y="48.6" width="1" height="1.1" fill="#CCCCCC"/><rect x="19" y="48.6" width="1" height="1.1" fill="#CCCCCC"/><rect x="20" y="48.6" width="1" height="1.1" fill="#CCCCCC"/><rect x="22" y="48.6" width="1" height="1.1" fill="#CCCCCC"/><rect x="23" y="48.6" width="1" height="1.1" fill="#CCCCCC"/><rect x="24" y="48.6" width="1" height="1.1" fill="#CCCCCC"/><rect x="25" y="48.6" width="1" height="1.1" fill="#CCCCCC"/><rect x="26" y="48.6" width="1" height="1.1" fill="#CCCCCC"/><rect x="28" y="48.2" width="1" height="1.5" fill="#CCCCCC"/><rect x="29" y="48.6" width="1" height="1.1" fill="#CCCCCC"/><rect x="30" y="48.2" width="1" height="1.5" fill="#CCCCCC"/><rect x="31" y="48.6" width="1" height="1.1" fill="#CCCCCC"/><rect x="32" y="48.6" width="1" height="1.1" fill="#CCCCCC"/><rect x="34" y="48.6" width="1" height="1.1" fill="#CCCCCC"/><rect x="35" y="48.6" width="1" height="1.1" fill="#CCCCCC"/><rect x="36" y="48.2" width="1" height="1.5" fill="#CCCCCC"/><rect x="38" y="48.6" width="1" height="1.1" fill="#CCCCCC"/><rect x="39" y="48.6" width="1" height="1.1" fill="#CCCCCC"/><rect x="40" y="48.6" width="1" height="1.1" fill="#CCCCCC"/><rect x="41" y="48.2" width="1" height="1.5" fill="#CCCCCC"/><rect x="42" y="48.6" width="1" height="1.1" fill="#CCCCCC"/><rect x="44" y="48.6" width="1" height="1.1" fill="#CCCCCC"/><rect x="45" y="48.6" width="1" height="1.1" fill="#CCCCCC"/><rect x="46" y="48.6" width="1" height="1.1" fill="#CCCCCC"/><rect x="47" y="48.6" width="1" height="1.1" fill="#CCCCCC"/><rect x="48" y="48.6" width="1" height="1.1" fill="#CCCCCC"/><rect x="49" y="48.6" width="1" height="1.1" fill="#CCCCCC"/><rect x="50" y="48.2" width="1" height="1.5" fill="#CCCCCC"/><rect x="51" y="48.6" width="1" height="1.1" fill="#CCCCCC"/><rect x="52" y="48.2" width="1" height="1.5" fill="#CCCCCC"/><rect x="53" y="48.6" width="1" height="1.1" fill="#CCCCCC"/><rect x="54" y="48.6" width="1" height="1.1" fill="#CCCCCC"/><rect x="56" y="48.6" width="1" height="1.1" fill="#CCCCCC"/><rect x="57" y="48.2" width="1" height="1.5" fill="#CCCCCC"/><rect x="58" y="48.6" width="1" height="1.1" fill="#CCCCCC"/><rect x="59" y="48.6" width="1" height="1.1" fill="#CCCCCC"/><rect x="60" y="48.6" width="1" height="1.1" fill="#CCCCCC"/><rect x="61" y="48.6" width="1" height="1.1" fill="#CCCCCC"/><rect x="62" y="48.6" width="1" height="1.1" fill="#CCCCCC"/><rect x="63" y="48.6" width="1" height="1.1" fill="#CCCCCC"/><rect x="64" y="48.6" width="1" height="1.1" fill="#CCCCCC"/><rect x="65" y="48.6" width="1" height="1.1" fill="#CCCCCC"/><rect x="67" y="48.6" width="1" height="1.1" fill="#CCCCCC"/><rect x="68" y="48.2" width="1" height="1.5" fill="#CCCCCC"/><rect x="69" y="48.6" width="1" height="1.1" fill="#CCCCCC"/><rect x="70" y="48.2" width="1" height="1.5" fill="#CCCCCC"/><rect x="71" y="48.6" width="1" height="1.1" fill="#CCCCCC"/><rect x="16" y="50.2" width="1" height="1.5" fill="#CCCCCC"/><rect x="17" y="50.6" width="1" height="1.1" fill="#CCCCCC"/><rect x="18" y="50.2" width="1" height="1.5" fill="#CCCCCC"/><rect x="20" y="50.2" width="1" height="1.5" fill="#CCCCCC"/><rect x="21" y="50.6" width="1" height="1.1" fill="#CCCCCC"/><rect x="23" y="50.6" width="1" height="1.1" fill="#CCCCCC"/><rect x="24" y="50.6" width="1" height="1.1" fill="#CCCCCC"/><rect x="25" y="50.6" width="1" height="1.1" fill="#CCCCCC"/><rect x="26" y="50.6" width="1" height="1.1" fill="#CCCCCC"/><rect x="27" y="50.6" width="1" height="1.1" fill="#CCCCCC"/><rect x="28" y="50.6" width="1" height="1.1" fill="#CCCCCC"/><rect x="29" y="50.2" width="1" height="1.5" fill="#CCCCCC"/><rect x="31" y="50.2" width="1" height="1.5" fill="#CCCCCC"/><rect x="32" y="50.6" width="1" height="1.1" fill="#CCCCCC"/><rect x="33" y="50.6" width="1" height="1.1" fill="#CCCCCC"/><rect x="34" y="50.6" width="1" height="1.1" fill="#CCCCCC"/><rect x="35" y="50.6" width="1" height="1.1" fill="#CCCCCC"/><rect x="36" y="50.6" width="1" height="1.1" fill="#CCCCCC"/><rect x="38" y="50.6" width="1" height="1.1" fill="#CCCCCC"/><rect x="39" y="50.6" width="1" height="1.1" fill="#CCCCCC"/><rect x="40" y="50.6" width="1" height="1.1" fill="#CCCCCC"/><rect x="41" y="50.6" width="1" height="1.1" fill="#CCCCCC"/><rect x="42" y="50.2" width="1" height="1.5" fill="#CCCCCC"/><rect x="43" y="50.6" width="1" height="1.1" fill="#CCCCCC"/><rect x="44" y="50.2" width="1" height="1.5" fill="#CCCCCC"/><rect x="45" y="50.6" width="1" height="1.1" fill="#CCCCCC"/><rect x="46" y="50.6" width="1" height="1.1" fill="#CCCCCC"/><rect x="47" y="50.2" width="1" height="1.5" fill="#CCCCCC"/><rect x="49" y="50.6" width="1" height="1.1" fill="#CCCCCC"/><rect x="50" y="50.2" width="1" height="1.5" fill="#CCCCCC"/><rect x="52" y="50.2" width="1" height="1.5" fill="#CCCCCC"/><rect x="53" y="50.6" width="1" height="1.1" fill="#CCCCCC"/><rect x="54" y="50.2" width="1" height="1.5" fill="#CCCCCC"/><rect x="55" y="50.6" width="1" height="1.1" fill="#CCCCCC"/><rect x="56" y="50.6" width="1" height="1.1" fill="#CCCCCC"/><rect x="57" y="50.6" width="1" height="1.1" fill="#CCCCCC"/><rect x="59" y="50.6" width="1" height="1.1" fill="#CCCCCC"/><rect x="60" y="50.2" width="1" height="1.5" fill="#CCCCCC"/><rect x="62" y="50.2" width="1" height="1.5" fill="#CCCCCC"/><rect x="63" y="50.6" width="1" height="1.1" fill="#CCCCCC"/><rect x="64" y="50.2" width="1" height="1.5" fill="#CCCCCC"/><rect x="65" y="50.6" width="1" height="1.1" fill="#CCCCCC"/><rect x="66" y="50.6" width="1" height="1.1" fill="#CCCCCC"/><rect x="67" y="50.6" width="1" height="1.1" fill="#CCCCCC"/><rect x="69" y="50.6" width="1" height="1.1" fill="#CCCCCC"/><rect x="70" y="50.6" width="1" height="1.1" fill="#CCCCCC"/><rect x="71" y="50.6" width="1" height="1.1" fill="#CCCCCC"/><rect x="72" y="50.6" width="1" height="1.1" fill="#CCCCCC"/><rect x="73" y="50.6" width="1" height="1.1" fill="#CCCCCC"/><rect x="75" y="50.6" width="1" height="1.1" fill="#CCCCCC"/><rect x="76" y="50.2" width="1" height="1.5" fill="#CCCCCC"/><rect x="77" y="50.6" width="1" height="1.1" fill="#CCCCCC"/><rect x="78" y="50.6" width="1" height="1.1" fill="#CCCCCC"/><rect x="79" y="50.6" width="1" height="1.1" fill="#CCCCCC"/><rect x="80" y="50.6" width="1" height="1.1" fill="#CCCCCC"/><rect x="81" y="50.6" width="1" height="1.1" fill="#CCCCCC"/><rect x="20" y="52.6" width="1" height="1.1" fill="#808080"/><rect x="21" y="52.2" width="1" height="1.5" fill="#569CD6"/><rect x="22" y="52.6" width="1" height="1.1" fill="#569CD6"/><rect x="23" y="52.6" width="1" height="1.1" fill="#808080"/><rect x="20" y="54.6" width="1" height="1.1" fill="#808080"/><rect x="21" y="54.2" width="1" height="1.5" fill="#569CD6"/><rect x="22" y="54.6" width="1" height="1.1" fill="#569CD6"/><rect x="23" y="54.2" width="1" height="1.5" fill="#569CD6"/><rect x="24" y="54.2" width="1" height="1.5" fill="#569CD6"/><rect x="25" y="54.6" width="1" height="1.1" fill="#569CD6"/><rect x="26" y="54.6" width="1" height="1.1" fill="#569CD6"/><rect x="28" y="54.6" width="1" height="1.1" fill="#9CDCFE"/><rect x="29" y="54.2" width="1" height="1.5" fill="#9CDCFE"/><rect x="30" y="54.6" width="1" height="1.1" fill="#9CDCFE"/><rect x="31" y="54.6" width="1" height="1.1" fill="#9CDCFE"/><rect x="32" y="54.6" width="1" height="1.1" fill="#9CDCFE"/><rect x="33" y="54.6" width="1" height="1.1" fill="#CCCCCC"/><rect x="34" y="54.2" width="1" height="1.5" fill="#CE9178"/><rect x="35" y="54.2" width="1" height="1.5" fill="#CE9178"/><rect x="36" y="54.6" width="1" height="1.1" fill="#CE9178"/><rect x="37" y="54.2" width="1" height="1.5" fill="#CE9178"/><rect x="38" y="54.2" width="1" height="1.5" fill="#CE9178"/><rect x="39" y="54.6" width="1" height="1.1" fill="#CE9178"/><rect x="40" y="54.6" width="1" height="1.1" fill="#CE9178"/><rect x="41" y="54.2" width="1" height="1.5" fill="#CE9178"/><rect x="42" y="54.6" width="1" height="1.1" fill="#808080"/><rect x="43" y="54.2" width="1" height="1.5" fill="#CCCCCC"/><rect x="44" y="54.6" width="1" height="1.1" fill="#CCCCCC"/><rect x="45" y="54.6" width="1" height="1.1" fill="#CCCCCC"/><rect x="46" y="54.6" width="1" height="1.1" fill="#CCCCCC"/><rect x="48" y="54.6" width="1" height="1.1" fill="#CCCCCC"/><rect x="49" y="54.6" width="1" height="1.1" fill="#CCCCCC"/><rect x="50" y="54.6" width="1" height="1.1" fill="#CCCCCC"/><rect x="51" y="54.6" width="1" height="1.1" fill="#CCCCCC"/><rect x="52" y="54.6" width="1" height="1.1" fill="#CCCCCC"/><rect x="53" y="54.6" width="1" height="1.1" fill="#808080"/><rect x="54" y="54.2" width="1" height="1.5" fill="#808080"/><rect x="55" y="54.2" width="1" height="1.5" fill="#569CD6"/><rect x="56" y="54.6" width="1" height="1.1" fill="#569CD6"/><rect x="57" y="54.2" width="1" height="1.5" fill="#569CD6"/><rect x="58" y="54.2" width="1" height="1.5" fill="#569CD6"/><rect x="59" y="54.6" width="1" height="1.1" fill="#569CD6"/><rect x="60" y="54.6" width="1" height="1.1" fill="#569CD6"/><rect x="61" y="54.6" width="1" height="1.1" fill="#808080"/><rect x="12" y="56.6" width="1" height="1.1" fill="#808080"/><rect x="13" y="56.2" width="1" height="1.5" fill="#808080"/><rect x="14" y="56.2" width="1" height="1.5" fill="#569CD6"/><rect x="15" y="56.6" width="1" height="1.1" fill="#569CD6"/><rect x="16" y="56.6" width="1" height="1.1" fill="#569CD6"/><rect x="17" y="56.6" width="1" height="1.1" fill="#808080"/><rect x="8" y="58.6" width="1" height="1.1" fill="#808080"/><rect x="9" y="58.2" width="1" height="1.5" fill="#808080"/><rect x="10" y="58.2" width="1" height="1.5" fill="#569CD6"/><rect x="11" y="58.6" width="1" height="1.1" fill="#569CD6"/><rect x="12" y="58.6" width="1" height="1.1" fill="#569CD6"/><rect x="13" y="58.6" width="1" height="1.1" fill="#808080"/><rect x="4" y="62.6" width="1" height="1.1" fill="#808080"/><rect x="5" y="62.2" width="1" height="1.5" fill="#808080"/><rect x="6" y="62.2" width="1" height="1.5" fill="#569CD6"/><rect x="7" y="62.6" width="1" height="1.1" fill="#569CD6"/><rect x="8" y="62.2" width="1" height="1.5" fill="#569CD6"/><rect x="9" y="62.6" width="1" height="1.1" fill="#569CD6"/><rect x="10" y="62.6" width="1" height="1.1" fill="#808080"/><rect x="0" y="64.6" width="1" height="1.1" fill="#808080"/><rect x="1" y="64.2" width="1" height="1.5" fill="#808080"/><rect x="2" y="64.2" width="1" height="1.5" fill="#569CD6"/><rect x="3" y="64.2" width="1" height="1.5" fill="#569CD6"/><rect x="4" y="64.6" width="1" height="1.1" fill="#569CD6"/><rect x="5" y="64.2" width="1" height="1.5" fill="#569CD6"/><rect x="6" y="64.6" width="1" height="1.1" fill="#808080"/></svg>
<div class="a" style="left:1051px;top:92px;width:1px;height:614px;background:#141414"></div>
<div class="a" style="left:1052px;top:93px;width:13px;height:2px;background:#A0A0A0"></div>
<!-- chat -->
<div class="a" style="left:1084px;top:63px;width:31px;height:1px;background:#0078D4"></div>
<div class="a" style="left:1082px;top:558px;width:113px;height:24px;border:1px solid #3C3C3C;border-radius:4px;background:#1F1F1F"></div>
<div class="a" style="left:1203px;top:558px;width:91px;height:24px;border:1px solid #3C3C3C;border-radius:4px;background:#1F1F1F"></div>
<div class="a" style="left:1082px;top:598px;width:267px;height:92px;border:1px solid #3C3C3C;border-radius:6px;background:#313131"></div>
<div class="a" style="left:1089px;top:605px;width:20px;height:20px;border:1px solid #454545;border-radius:4px"></div>
<div class="a" style="left:1113px;top:605px;width:103px;height:20px;border:1px solid #454545;border-radius:4px"></div>
<!--ICONS--><svg class="a" style="left:0;top:0;pointer-events:none" width="1364" height="727" viewBox="0 0 1364 727"><g transform="translate(9,9) scale(0.16)"><path fill="#1A8CDB" d="M96.46 10.8L75.86.87a6.23 6.23 0 0 0-7.1 1.21L29.33 38.04 12.15 25a4.16 4.16 0 0 0-5.32.24L1.33 30.250a4.16 4.16 0 0 0 0 6.16L16.23 50 1.33 63.6a4.16 4.16 0 0 0 0 6.16l5.5 5a4.16 4.16 0 0 0 5.32.24l17.18-13.04 39.43 35.96a6.23 6.23 0 0 0 7.1 1.21l20.6-9.92A6.24 6.24 0 0 0 100 83.6V16.4a6.24 6.24 0 0 0-3.54-5.6zM75 72.7L45.1 50 75 27.3z"/><path fill="#2DA6F0" d="M75 0.9 L96.46 10.8 A6.24 6.24 0 0 1 100 16.4 V83.6 A6.24 6.24 0 0 1 96.46 89.2 L75 99.1z"/></g>
<rect x="304" y="16" width="2" height="2" rx="0.4" fill="#CCCCCC"/>
<rect x="308" y="16" width="2" height="2" rx="0.4" fill="#CCCCCC"/>
<rect x="312" y="16" width="2" height="2" rx="0.4" fill="#CCCCCC"/>
<rect x="318" y="52" width="2" height="2" rx="0.4" fill="#CCCCCC"/>
<rect x="322" y="52" width="2" height="2" rx="0.4" fill="#CCCCCC"/>
<rect x="326" y="52" width="2" height="2" rx="0.4" fill="#CCCCCC"/>
<path d="M387.5,16.8 H375.5 M381,12.2 L375.3,16.8 L381,21.4" stroke="#CCCCCC" stroke-width="1.1" fill="none" stroke-linejoin="round" stroke-linecap="round" />
<path d="M400.8,16.8 H412.5 M407,12.2 L412.7,16.8 L407,21.4" stroke="#6B6B6B" stroke-width="1.1" fill="none" stroke-linejoin="round" stroke-linecap="round" />
<circle cx="656.5" cy="15.4" r="4.1" stroke="#CCCCCC" stroke-width="1.1" fill="none"/>
<path d="M659.5,18.5 L663.6,22.2" stroke="#CCCCCC" stroke-width="1.1" fill="none" stroke-linejoin="round" stroke-linecap="round" />
<path d="M969.8,11.3 H962.5 V20.3 H964.8 V23.2 L968.8,20.3 H975.6 V16.8" stroke="#CCCCCC" stroke-width="1.1" fill="none" stroke-linejoin="round" stroke-linecap="round" />
<path d="M973.40,8.30 L974.25,10.45 L976.40,11.30 L974.25,12.15 L973.40,14.30 L972.55,12.15 L970.40,11.30 L972.55,10.45Z" fill="#CCCCCC" />
<path d="M976.20,12.80 L976.85,14.45 L978.50,15.10 L976.85,15.75 L976.20,17.40 L975.55,15.75 L973.90,15.10 L975.55,14.45Z" fill="#CCCCCC" />
<path d="M982.4,15.4 L986.1,18.8 L989.8,15.4" stroke="#CCCCCC" stroke-width="1.1" fill="none" stroke-linejoin="round" stroke-linecap="round" />
<path d="M1127.7,12 h5.2 v10.2 h-5.2z" stroke="#CCCCCC" stroke-width="1.1" fill="none" stroke-linejoin="round" stroke-linecap="round" />
<path d="M1135.2,11.8 h4.6 v4.5 h-4.6z M1135.2,17.6 h4.6 v4.5 h-4.6z" stroke="#CCCCCC" stroke-width="1.1" fill="none" stroke-linejoin="round" stroke-linecap="round" />
<rect x="1154" y="11.7" width="12.2" height="10.6" rx="1.5" stroke="#CCCCCC" stroke-width="1.1" fill="none"/>
<path d="M1154,13.2 a1.5,1.5 0 0 1 1.5,-1.5 H1159.3 V22.3 H1155.5 a1.5,1.5 0 0 1 -1.5,-1.5z" fill="#CCCCCC" />
<rect x="1180" y="11.7" width="12.2" height="10.6" rx="1.5" stroke="#CCCCCC" stroke-width="1.1" fill="none"/>
<path d="M1180,19.2 H1192.2" stroke="#CCCCCC" stroke-width="1.1" fill="none" stroke-linejoin="round" stroke-linecap="round" />
<rect x="1205.8" y="11.7" width="12.2" height="10.6" rx="1.5" stroke="#CCCCCC" stroke-width="1.1" fill="none"/>
<path d="M1212.3,11.7 H1216.5 a1.5,1.5 0 0 1 1.5,1.5 V20.8 a1.5,1.5 0 0 1 -1.5,1.5 H1212.3z" fill="#CCCCCC" />
<path d="M1245,16.5 H1255.2" stroke="#CCCCCC" stroke-width="1.0" fill="none" stroke-linejoin="round" stroke-linecap="round" stroke-linecap="butt"/>
<path d="M1291.3,14.3 h7.6 v7.6 h-7.6z M1293.3,14.3 v-2 h7.6 v7.6 h-2" stroke="#CCCCCC" stroke-width="1.0" fill="none" stroke-linejoin="round" stroke-linecap="round" />
<path d="M1336.8,11.8 L1347.2,22.2 M1347.2,11.8 L1336.8,22.2" stroke="#CCCCCC" stroke-width="1.0" fill="none" stroke-linejoin="round" stroke-linecap="round" />
<path d="M16.8,50 a1.5,1.5 0 0 1 1.5,-1.5 H24.6 L30.6,54.5 V64.8 a1.6,1.6 0 0 1 -1.6,1.6 H18.3 a1.5,1.5 0 0 1 -1.5,-1.5z M24.6,48.5 V54.5 H30.6" stroke="#D7D7D7" stroke-width="1.3" fill="none" stroke-linejoin="round" stroke-linecap="round" />
<path d="M14.2,51.5 V65.5 a2.8,2.8 0 0 0 2.8,2.8 H28" stroke="#D7D7D7" stroke-width="1.3" fill="none" stroke-linejoin="round" stroke-linecap="round" />
<circle cx="20.8" cy="104.6" r="7.6" stroke="#868686" stroke-width="1.3" fill="none"/>
<path d="M26.4,110.4 L33,116.6" stroke="#868686" stroke-width="1.4" fill="none" stroke-linejoin="round" stroke-linecap="round" />
<circle cx="17.9" cy="146.6" r="3.3" stroke="#868686" stroke-width="1.2" fill="none"/>
<circle cx="17.9" cy="163.3" r="3.3" stroke="#868686" stroke-width="1.2" fill="none"/>
<circle cx="28.4" cy="151.1" r="3.3" stroke="#868686" stroke-width="1.2" fill="none"/>
<path d="M17.9,149.9 V160" stroke="#868686" stroke-width="1.2" fill="none" stroke-linejoin="round" stroke-linecap="round" />
<path d="M17.9,157 H24.5 a3.5,3.5 0 0 0 3.4,-3" stroke="#868686" stroke-width="1.2" fill="none" stroke-linejoin="round" stroke-linecap="round" />
<path d="M16.5,200.8 V195.2 a1,1 0 0 1 1.5,-0.8 L31.3,202.2 a0.8,0.8 0 0 1 0,1.4 L24,207.8" stroke="#868686" stroke-width="1.2" fill="none" stroke-linejoin="round" stroke-linecap="round" />
<ellipse cx="17.2" cy="209.4" rx="2.9" ry="4.1" stroke="#868686" stroke-width="1.2" fill="none"/>
<path d="M14.4,206.6 H20 M12,205.5 L14.4,207 M22.4,205.5 L20,207 M11.5,209.6 H14.3 M22.9,209.6 H20.1 M12,213.6 L14.4,212 M22.4,213.6 L20,212" stroke="#868686" stroke-width="1.1" fill="none" stroke-linejoin="round" stroke-linecap="round" />
<path d="M14.6,243 a1,1 0 0 1 1,-1 H22.4 V259.3 H15.6 a1,1 0 0 1 -1,-1z M14.6,251 H31.2 a0.9,0.9 0 0 1 0.9,0.9 V258.3 a1,1 0 0 1 -1,1 H22.4" stroke="#868686" stroke-width="1.2" fill="none" stroke-linejoin="round" stroke-linecap="round" />
<path d="M28.2,241.2 L32.7,245.7 L28.2,250.2 L23.7,245.7z" stroke="#868686" stroke-width="1.2" fill="none" stroke-linejoin="round" stroke-linecap="round" />
<path d="M23.2,290.8 H12.6 a0.8,0.8 0 0 0 -0.8,0.8 V299.8 a0.8,0.8 0 0 0 0.8,0.8 H14.5 V305 L19.5,301" stroke="#868686" stroke-width="1.2" fill="none" stroke-linejoin="round" stroke-linecap="round" />
<path d="M22.8,300.2 H31.8 a0.8,0.8 0 0 1 0.8,0.8 V306 a0.8,0.8 0 0 1 -0.8,0.8 H30 V309.8 L26.6,306.8 H23.6 a0.8,0.8 0 0 1 -0.8,-0.8z" stroke="#868686" stroke-width="1.2" fill="none" stroke-linejoin="round" stroke-linecap="round" />
<path d="M28.20,286.60 L29.03,289.67 L32.10,290.50 L29.03,291.33 L28.20,294.40 L27.37,291.33 L24.30,290.50 L27.37,289.67Z" fill="#868686" />
<path d="M32.20,293.10 L32.82,295.38 L35.10,296.00 L32.82,296.62 L32.20,298.90 L31.58,296.62 L29.30,296.00 L31.58,295.38Z" fill="#868686" />
<circle cx="23.1" cy="633.9" r="9.9" stroke="#868686" stroke-width="1.3" fill="none"/>
<circle cx="23.1" cy="629.8" r="3.1" fill="#868686"/>
<path d="M18,634.3 H28.2 V636.5 a3.2,3.2 0 0 1 -3.2,3.2 H21.2 a3.2,3.2 0 0 1 -3.2,-3.2z" fill="#868686" />
<path d="M19.86,676.27 L21.13,675.71 L20.98,672.74 L25.22,672.74 L25.07,675.71 L26.36,676.27 L27.48,677.10 L29.97,675.48 L32.09,679.16 L29.45,680.51 L29.60,681.91 L29.45,683.29 L32.09,684.64 L29.97,688.32 L27.48,686.70 L26.34,687.53 L25.07,688.09 L25.22,691.06 L20.98,691.06 L21.13,688.09 L19.84,687.53 L18.72,686.70 L16.23,688.32 L14.11,684.64 L16.75,683.29 L16.60,681.89 L16.75,680.51 L14.11,679.16 L16.23,675.48 L18.72,677.10Z" stroke="#868686" stroke-width="1.3" fill="none" stroke-linejoin="round" stroke-linecap="round" />
<circle cx="23.1" cy="681.9" r="2.4" stroke="#868686" stroke-width="1.3" fill="none"/>
<path d="M52.5,77.5 L57.5,82.5 L62.5,77.5" stroke="#CCCCCC" stroke-width="1.1" fill="none" stroke-linejoin="round" stroke-linecap="round" />
<path d="M67.3,98.3 L73,103.2 L67.3,108.1" stroke="#CCCCCC" stroke-width="1.1" fill="none" stroke-linejoin="round" stroke-linecap="round" />
<path d="M68.39999999999999,122.1 L64.6,125.69999999999999 L68.39999999999999,129.29999999999998 M70.8,122.1 L74.6,125.69999999999999 L70.8,129.29999999999998" stroke="#E37933" stroke-width="1.5" fill="none" stroke-linejoin="miter"/>
<path d="M66.6,142.8 L65.3,151.6 M70.9,142.8 L69.6,151.6 M64.2,145.8 H73 M63.7,148.8 H72.5" stroke="#519ABA" stroke-width="1.3" fill="none" stroke-linejoin="round" stroke-linecap="round" stroke-linecap="butt"/>
<path d="M54,667.8 L59.5,673 L54,678.2" stroke="#CCCCCC" stroke-width="1.1" fill="none" stroke-linejoin="round" stroke-linecap="round" />
<path d="M54,689.8 L59.5,695 L54,700.2" stroke="#CCCCCC" stroke-width="1.1" fill="none" stroke-linejoin="round" stroke-linecap="round" />
<path d="M366.40000000000003,48.9 L362.6,52.5 L366.40000000000003,56.1 M368.8,48.9 L372.6,52.5 L368.8,56.1" stroke="#E37933" stroke-width="1.5" fill="none" stroke-linejoin="miter"/>
<path d="M448.6,48.4 L457.6,57.4 M457.6,48.4 L448.6,57.4" stroke="#FFFFFF" stroke-width="1.2" fill="none" stroke-linejoin="round" stroke-linecap="round" />
<path d="M486.2,47.5 L484.9,56.5 M490.5,47.5 L489.2,56.5 M483.7,50.5 H492.4 M483.2,53.6 H491.9" stroke="#519ABA" stroke-width="1.3" fill="none" stroke-linejoin="round" stroke-linecap="round" stroke-linecap="butt"/>
<rect x="1009.3" y="46.2" width="13.2" height="13.2" rx="2" stroke="#CCCCCC" stroke-width="1.1" fill="none"/>
<path d="M1015.5,46.3 V59.3" stroke="#CCCCCC" stroke-width="1.0" fill="none" stroke-linejoin="round" stroke-linecap="round" />
<rect x="1037" y="52" width="2" height="2" rx="0.4" fill="#CCCCCC"/>
<rect x="1041" y="52" width="2" height="2" rx="0.4" fill="#CCCCCC"/>
<rect x="1045" y="52" width="2" height="2" rx="0.4" fill="#CCCCCC"/>
<path d="M372.2,77.5 L368.4,81.1 L372.2,84.7 M374.59999999999997,77.5 L378.4,81.1 L374.59999999999997,84.7" stroke="#E37933" stroke-width="1.5" fill="none" stroke-linejoin="miter"/>
<path d="M451.3,76.3 L456.3,81.3 L451.3,86.3" stroke="#CCCCCC" stroke-width="1.0" fill="none" stroke-linejoin="round" stroke-linecap="round" />
<circle cx="462.5" cy="85.8" r="0.7" fill="#A9A9A9"/>
<circle cx="465.6" cy="85.8" r="0.7" fill="#A9A9A9"/>
<circle cx="468.7" cy="85.8" r="0.7" fill="#A9A9A9"/>
<path d="M1185.6,46.8 V58.5 M1179.6,52.6 H1191.7" stroke="#CCCCCC" stroke-width="1.1" fill="none" stroke-linejoin="round" stroke-linecap="round" />
<path d="M1198.3,51.2 L1202.1,55 L1205.9,51.2" stroke="#CCCCCC" stroke-width="1.0" fill="none" stroke-linejoin="round" stroke-linecap="round" />
<path d="M1222.15,48.06 A5.7,5.7 0 1 1 1219.3,53 M1219.6,47.3 V50.6 H1222.9" stroke="#CCCCCC" stroke-width="1.1" fill="none" stroke-linejoin="round" stroke-linecap="round" />
<path d="M1224.7,50.3 V53.6 H1227.3" stroke="#CCCCCC" stroke-width="1.0" fill="none" stroke-linejoin="round" stroke-linecap="round" />
<path d="M1248.75,49.10 L1249.47,48.77 L1249.45,47.10 L1252.55,47.10 L1252.53,48.77 L1253.25,49.11 L1253.90,49.56 L1255.34,48.71 L1256.88,51.39 L1255.43,52.21 L1255.50,53.00 L1255.43,53.79 L1256.88,54.61 L1255.34,57.29 L1253.90,56.44 L1253.25,56.90 L1252.53,57.23 L1252.55,58.90 L1249.45,58.90 L1249.47,57.23 L1248.75,56.89 L1248.10,56.44 L1246.66,57.29 L1245.12,54.61 L1246.57,53.79 L1246.50,53.00 L1246.57,52.21 L1245.12,51.39 L1246.66,48.71 L1248.10,49.56Z" stroke="#CCCCCC" stroke-width="1.1" fill="none" stroke-linejoin="round" stroke-linecap="round" />
<circle cx="1251" cy="53" r="1.8" stroke="#CCCCCC" stroke-width="1" fill="none"/>
<rect x="1272" y="52" width="2" height="2" rx="0.4" fill="#CCCCCC"/>
<rect x="1276" y="52" width="2" height="2" rx="0.4" fill="#CCCCCC"/>
<rect x="1280" y="52" width="2" height="2" rx="0.4" fill="#CCCCCC"/>
<path d="M1296.4,45.3 V60.5" stroke="#5A5A5A" stroke-width="1.0" fill="none" stroke-linejoin="round" stroke-linecap="round" stroke-linecap="butt"/>
<path d="M1309.9,51 V47.5 H1314.4 M1317.9,47.5 H1322.4 V51 M1322.4,55 V58.5 H1317.9 M1314.4,58.5 H1309.9 V55" stroke="#CCCCCC" stroke-width="1.1" fill="none" stroke-linejoin="round" stroke-linecap="round" />
<path d="M1337.6,48.5 L1346.5,57.5 M1346.5,48.5 L1337.6,57.5" stroke="#CCCCCC" stroke-width="1.1" fill="none" stroke-linejoin="round" stroke-linecap="round" />
<path d="M1216,224.2 H1198.6 a2.2,2.2 0 0 0 -2.2,2.2 V244.4 a2.2,2.2 0 0 0 2.2,2.2 H1203.3 V253.6 L1211.3,246.6 H1227.8 a2.2,2.2 0 0 0 2.2,-2.2 V238.6" stroke="#CCCCCC" stroke-width="2.1" fill="none" stroke-linejoin="round" stroke-linecap="round" />
<path d="M1224.20,217.70 L1225.81,222.99 L1231.10,224.60 L1225.81,226.21 L1224.20,231.50 L1222.59,226.21 L1217.30,224.60 L1222.59,222.99Z" fill="#CCCCCC" />
<path d="M1230.60,227.90 L1231.77,231.73 L1235.60,232.90 L1231.77,234.07 L1230.60,237.90 L1229.43,234.07 L1225.60,232.90 L1229.43,231.73Z" fill="#CCCCCC" />
<g transform="rotate(-45 1099 614.5)"><rect x="1092.6" y="612.6" width="12.8" height="3.8" rx="1.9" stroke="#CCCCCC" stroke-width="1.1" fill="none"/><path d="M1095,614.5 H1101.8" stroke="#CCCCCC" stroke-width="1.1" stroke-linecap="round"/></g>
<path d="M1125.796,611.1 L1122.3,614.7 L1125.796,618.3000000000001 M1128.004,611.1 L1131.5,614.7 L1128.004,618.3000000000001" stroke="#E37933" stroke-width="1.4" fill="none" stroke-linejoin="miter"/>
<path d="M1198.6,610.4 L1207.9,619.7 M1207.9,610.4 L1198.6,619.7" stroke="#CCCCCC" stroke-width="1.1" fill="none" stroke-linejoin="round" stroke-linecap="round" />
<path d="M1117.3,670.3 L1120.8,673.8 L1124.3,670.3" stroke="#CCCCCC" stroke-width="1.0" fill="none" stroke-linejoin="round" stroke-linecap="round" />
<path d="M1198.4,670.3 L1201.9,673.8 L1205.4,670.3" stroke="#CCCCCC" stroke-width="1.0" fill="none" stroke-linejoin="round" stroke-linecap="round" />
<path d="M1303.3,675.9 H1300.6 A2.9,2.9 0 0 1 1300.4,670.1 A4.5,4.5 0 0 1 1309.3,669.6 A3.2,3.2 0 0 1 1312.2,673" stroke="#8A8A8A" stroke-width="1.1" fill="none" stroke-linejoin="round" stroke-linecap="round" />
<path d="M1303.8,670.9 L1313.9,675.4 L1303.8,679.9 L1305.1,675.4z" fill="#8A8A8A" />
<path d="M1324.2,665.6 L1338.2,672 L1324.2,678.4 L1326.2,672z M1326.2,672 H1331" stroke="#8A8A8A" stroke-width="1.1" fill="none" stroke-linejoin="round" stroke-linecap="round" />
<path d="M10.4,715.3 L14.7,718.8 L10.4,722.3 M19.7,711.5 L15.4,715 L19.7,718.7" stroke="#CCCCCC" stroke-width="1.1" fill="none" stroke-linejoin="round" stroke-linecap="round" />
<circle cx="46.9" cy="716.9" r="6" stroke="#CCCCCC" stroke-width="1.1" fill="none"/>
<path d="M44.3,714.3 L49.5,719.5 M49.5,714.3 L44.3,719.5" stroke="#CCCCCC" stroke-width="1.1" fill="none" stroke-linejoin="round" stroke-linecap="round" />
<path d="M75.9,711.2 L82.3,722 H69.6z M75.9,715 V718.6" stroke="#CCCCCC" stroke-width="1.1" fill="none" stroke-linejoin="round" stroke-linecap="round" />
<circle cx="75.9" cy="720.3" r="0.6" fill="#CCCCCC"/>
<path d="M1245.8,711.4 Q1243.7,711.4 1243.7,713.2 V715.7 Q1243.7,717 1242.2,717 Q1243.7,717 1243.7,718.3 V720.9 Q1243.7,722.7 1245.8,722.7" stroke="#CCCCCC" stroke-width="1.1" fill="none" stroke-linejoin="round" stroke-linecap="round" />
<path d="M1250.2,711.4 Q1252.3,711.4 1252.3,713.2 V715.7 Q1252.3,717 1253.8,717 Q1252.3,717 1252.3,718.3 V720.9 Q1252.3,722.7 1250.2,722.7" stroke="#CCCCCC" stroke-width="1.1" fill="none" stroke-linejoin="round" stroke-linecap="round" />
<circle cx="1314.4" cy="713.5" r="2.7" stroke="#CCCCCC" stroke-width="1.4" fill="none"/>
<circle cx="1319.9" cy="713.5" r="2.7" stroke="#CCCCCC" stroke-width="1.4" fill="none"/>
<path d="M1311.2,716.4 Q1309.2,716.9 1309.2,719 V720.3 Q1309.2,723.2 1317.15,723.2 Q1325.1,723.2 1325.1,720.3 V719 Q1325.1,716.9 1323.1,716.4" stroke="#CCCCCC" stroke-width="1.4" fill="none" stroke-linejoin="round" stroke-linecap="round" />
<path d="M1314.8,718.2 h1.2 v2.6 h-1.2z M1318.3,718.2 h1.2 v2.6 h-1.2z" fill="#CCCCCC" />
<path d="M1343.8,720.9 H1354.8 M1344.8,720.9 Q1345.4,720 1345.4,718.8 V714.9 a3.95,3.95 0 0 1 7.9,0 V718.8 Q1353.3,720 1353.9,720.9 M1348,722.1 a1.35,1.35 0 0 0 2.7,0" stroke="#CCCCCC" stroke-width="1.1" fill="none" stroke-linejoin="round" stroke-linecap="round" /></svg><!--/ICONS-->
<svg class="a" style="left:0;top:0;pointer-events:none" width="1364" height="727" font-family="Liberation Sans"><text x="41.32" y="22.10" font-size="13" fill="#CCCCCC" textLength="20.50" lengthAdjust="spacingAndGlyphs">File</text>
<text x="76.50" y="22.10" font-size="13" fill="#CCCCCC" textLength="22.31" lengthAdjust="spacingAndGlyphs">Edit</text>
<text x="115.40" y="22.10" font-size="13" fill="#CCCCCC" textLength="52.12" lengthAdjust="spacingAndGlyphs">Selection</text>
<text x="183.60" y="22.10" font-size="13" fill="#CCCCCC" textLength="26.52" lengthAdjust="spacingAndGlyphs">View</text>
<text x="226.90" y="22.10" font-size="13" fill="#CCCCCC" textLength="16.32" lengthAdjust="spacingAndGlyphs">Go</text>
<text x="258.74" y="22.10" font-size="13" fill="#CCCCCC" textLength="22.99" lengthAdjust="spacingAndGlyphs">Run</text>
<text x="670.60" y="22.00" font-size="12" fill="#CCCCCC" textLength="56.49" lengthAdjust="spacingAndGlyphs">cafeteria01</text>
<text x="67.30" y="57.00" font-size="11" fill="#CCCCCC" textLength="49.65" lengthAdjust="spacingAndGlyphs">EXPLORER</text>
<text x="67.30" y="85.00" font-size="11" font-weight="bold" fill="#CCCCCC" textLength="68.71" lengthAdjust="spacingAndGlyphs">CAFETERIA01</text>
<text x="81.10" y="108.20" font-size="13" fill="#CCCCCC" textLength="47.62" lengthAdjust="spacingAndGlyphs">imagens</text>
<text x="81.10" y="129.70" font-size="13" fill="#CCCCCC" textLength="59.49" lengthAdjust="spacingAndGlyphs">index.html</text>
<text x="81.10" y="151.90" font-size="13" fill="#CCCCCC" textLength="45.25" lengthAdjust="spacingAndGlyphs">style.css</text>
<text x="66.90" y="678.00" font-size="11" font-weight="bold" fill="#CCCCCC" textLength="46.52" lengthAdjust="spacingAndGlyphs">OUTLINE</text>
<text x="66.90" y="700.00" font-size="11" font-weight="bold" fill="#CCCCCC" textLength="50.43" lengthAdjust="spacingAndGlyphs">TIMELINE</text>
<text x="379.20" y="57.80" font-size="13" fill="#FFFFFF" textLength="59.59" lengthAdjust="spacingAndGlyphs">index.html</text>
<text x="499.70" y="57.80" font-size="13" fill="#9D9D9D" textLength="45.84" lengthAdjust="spacingAndGlyphs">style.css</text>
<text x="385.00" y="85.80" font-size="13" fill="#A9A9A9" textLength="59.69" lengthAdjust="spacingAndGlyphs">index.html</text>
<text x="1086.00" y="57.40" font-size="11" fill="#E7E7E7" textLength="26.05" lengthAdjust="spacingAndGlyphs">CHAT</text>
<text x="1106.50" y="296.50" font-size="22" fill="#CCCCCC" textLength="217.96" lengthAdjust="spacingAndGlyphs">Ask about your code</text>
<text x="1124.10" y="325.20" font-size="13" fill="#9D9D9D" textLength="183.59" lengthAdjust="spacingAndGlyphs">AI responses may be inaccurate.</text>
<text x="1093.60" y="348.00" font-size="13" fill="#4DAAFC" textLength="159.31" lengthAdjust="spacingAndGlyphs">Generate Agent Instructions</text>
<text x="1257.50" y="348.00" font-size="13" fill="#9D9D9D" textLength="80.33" lengthAdjust="spacingAndGlyphs">to onboard AI</text>
<text x="1157.50" y="366.10" font-size="13" fill="#9D9D9D" textLength="116.91" lengthAdjust="spacingAndGlyphs">onto your codebase.</text>
<text x="1082.20" y="547.00" font-size="11" fill="#9D9D9D" textLength="114.42" lengthAdjust="spacingAndGlyphs">SUGGESTED ACTIONS</text>
<text x="1090.52" y="574.90" font-size="13" fill="#CCCCCC" textLength="95.71" lengthAdjust="spacingAndGlyphs">Build Workspace</text>
<text x="1212.70" y="574.90" font-size="13" fill="#CCCCCC" textLength="72.02" lengthAdjust="spacingAndGlyphs">Show Config</text>
<text x="1138.30" y="618.90" font-size="12" fill="#CCCCCC" textLength="50.52" lengthAdjust="spacingAndGlyphs">index.html</text>
<text x="1088.41" y="647.90" font-size="13" fill="#8B8B8B" textLength="197.42" lengthAdjust="spacingAndGlyphs">Explore and understand your code</text>
<text x="1095.00" y="676.00" font-size="11.5" fill="#CCCCCC" textLength="16.88" lengthAdjust="spacingAndGlyphs">Ask</text>
<text x="1141.00" y="676.00" font-size="11.5" fill="#CCCCCC" textLength="53.63" lengthAdjust="spacingAndGlyphs">Pick Model</text>
<text x="58.50" y="721.80" font-size="12" fill="#CCCCCC" textLength="5.72" lengthAdjust="spacingAndGlyphs">0</text>
<text x="87.00" y="721.80" font-size="12" fill="#CCCCCC" textLength="6.39" lengthAdjust="spacingAndGlyphs">0</text>
<text x="1014.70" y="722.00" font-size="12" fill="#CCCCCC" textLength="53.90" lengthAdjust="spacingAndGlyphs">Ln 1, Col 1</text>
<text x="1085.40" y="722.00" font-size="12" fill="#CCCCCC" textLength="47.71" lengthAdjust="spacingAndGlyphs">Spaces: 4</text>
<text x="1150.30" y="722.00" font-size="12" fill="#CCCCCC" textLength="30.90" lengthAdjust="spacingAndGlyphs">UTF-8</text>
<text x="1198.00" y="722.00" font-size="12" fill="#CCCCCC" textLength="25.87" lengthAdjust="spacingAndGlyphs">CRLF</text>
<text x="1262.50" y="722.00" font-size="12" fill="#CCCCCC" textLength="30.00" lengthAdjust="spacingAndGlyphs">HTML</text></svg>
</body></html>
